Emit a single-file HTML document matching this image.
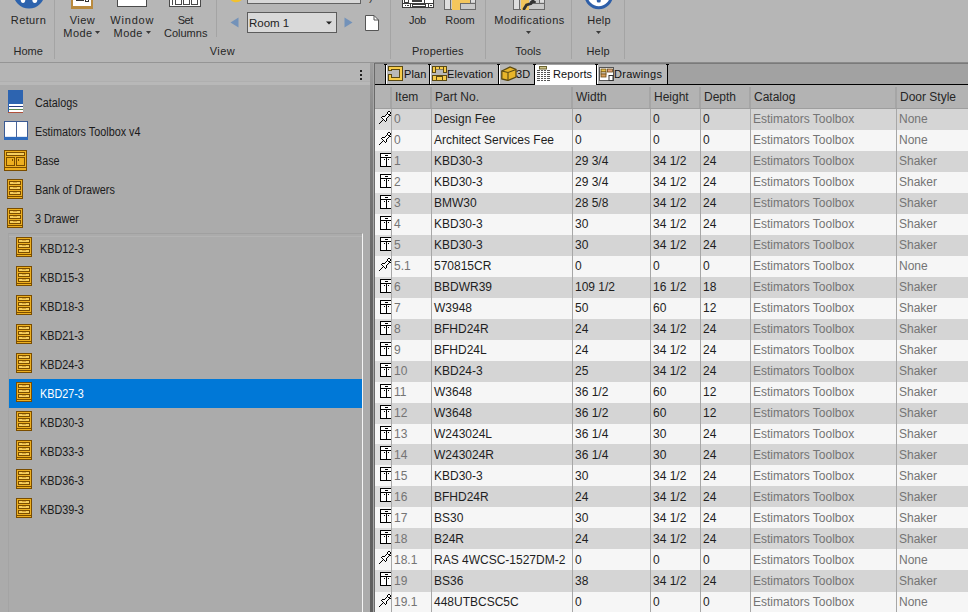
<!DOCTYPE html>
<html><head><meta charset="utf-8">
<style>
*{margin:0;padding:0;box-sizing:border-box}
html,body{width:968px;height:612px;overflow:hidden;background:#b5b5b5;font-family:"Liberation Sans",sans-serif;position:relative}
.abs{position:absolute}
/* ribbon */
#ribbon{position:absolute;left:0;top:0;width:968px;height:62px;background:#b6b6b6}
#ribbon .bl{position:absolute;left:0;top:62px;width:968px;height:1px;background:#959595}
#ribbon .bl2{position:absolute;left:375px;top:62px;width:593px;height:1px;background:#8a8a8a}
.rt{position:absolute;font-size:11px;color:#262626;white-space:nowrap;line-height:13px;width:100px;text-align:center}
.sep{position:absolute;width:1px;background:#a4a4a4}
/* left panel */
#lp{position:absolute;left:0;top:63px;width:370px;height:549px;background:#ababab}
#lph{position:absolute;left:0;top:0;width:370px;height:22px;background:#b5b5b5}
.tic{position:absolute;line-height:0}
.tt{position:absolute;left:35px;font-size:12px;line-height:13px;color:#1a1a1a;white-space:nowrap;transform:scaleX(0.9);transform-origin:0 0}
#sub{position:absolute;left:8px;top:170px;width:355px;height:400px;border-top:1px solid #a0a0a0;border-left:1px solid #a4a4a4;border-right:1px solid #f4f4f4}
.si{position:absolute;left:9px;width:353px;height:29px}
.si.sel{background:#0078d7}
.sic{position:absolute;left:7px;top:3px;line-height:0}
.st{position:absolute;left:31px;top:8px;font-size:12px;line-height:14px;color:#1a1a1a;white-space:nowrap;transform:scaleX(0.9);transform-origin:0 0}
.sel .st{color:#fff}
/* splitter */
#spl1{position:absolute;left:370px;top:63px;width:3px;height:549px;background:linear-gradient(to bottom,#9e9e9e 0px,#7c7c7c 87px,#626262 237px,#5f5f5f 549px)}
#spl2{position:absolute;left:373px;top:63px;width:1px;height:549px;background:#a6a6a6}
#spl3{position:absolute;left:374px;top:63px;width:1px;height:549px;background:#6a6a6a}
/* right */
#rp{position:absolute;left:375px;top:63px;width:593px;height:549px;background:#f0f0f0;overflow:hidden}
#tabs{position:absolute;left:0;top:0;width:593px;height:22px;background:#a2a2a2}
#tabs .tl{position:absolute;left:0;top:0;width:593px;height:1px;background:#7a7a7a}
#tabs .bot{position:absolute;left:0;top:21px;width:593px;height:1px;background:#000}
.tb{position:absolute;top:1px;width:1px;height:21px;background:#000}
.tw{position:absolute;top:2px;width:1px;height:19px;background:#fff}
.tabt{position:absolute;top:5px;font-size:11px;line-height:13px;color:#111;white-space:nowrap;letter-spacing:0.1px}
.tabi{position:absolute;top:2px}
#grid{position:absolute;left:0;top:22px;width:593px;height:527px}
#gh{position:absolute;left:0;top:0;width:593px;height:24px;background:#b3b3b3;border-bottom:1px solid #9e9e9e}
.hc{position:absolute;top:5px;font-size:12px;color:#262626;white-space:nowrap}
.hl{position:absolute;top:2px;width:2px;height:21px;background:#a5a5a5}
.r{position:absolute;left:0;width:593px;height:21px}
.r.d{background:#d5d5d5}
.r.l{background:#f6f6f6}
.c{position:absolute;top:3px;font-size:12px;color:#1e1e1e;white-space:nowrap}
.c.g{color:#747474}
.s1 .c{top:4px}
.s1 .icbg{position:absolute;left:0;top:0;width:16px;height:100%}
.r.d .icbg{background:#dcdcdc}
.rico{top:1px}
.vl{position:absolute;top:24px;width:1px;height:527px;background:#a7a7a7}
.icbg{position:absolute;left:0;top:0;width:16px;height:100%}
.r.d .icbg{background:#dcdcdc}
.rico{position:absolute;left:1px;top:0;width:16px;height:16px;line-height:0}
.ic{display:block}
</style></head><body>
<div id="ribbon">
<svg class="abs" style="left:13px;top:-23px" width="32" height="32" viewBox="0 0 32 32"><circle cx="16" cy="16" r="15.6" fill="#2d63ad"/><ellipse cx="10" cy="22.5" rx="2.3" ry="3.5" fill="#fff"/><ellipse cx="21.8" cy="22.5" rx="2.5" ry="3.5" fill="#fff"/></svg>
<div class="rt" style="left:-21.5px;top:14px;letter-spacing:0.4px">Return</div>
<div class="rt" style="left:-21.8px;top:45px;">Home</div>
<div class="sep" style="left:54px;top:0;height:59px"></div>
<svg class="abs" style="left:71px;top:-6px" width="22" height="15" viewBox="0 0 22 15" shape-rendering="crispEdges"><rect x="0" y="0" width="22" height="15" fill="#b98a3e"/><rect x="2" y="0" width="18" height="12" fill="#fff"/><rect x="5" y="6" width="8" height="1" fill="#333"/><rect x="14" y="4" width="4" height="4" fill="#333"/><rect x="15" y="5" width="2" height="2" fill="#fff"/></svg>
<div class="rt" style="left:32.5px;top:14px;letter-spacing:0.5px">View</div>
<div class="rt" style="left:28.0px;top:27px;letter-spacing:0.45px">Mode</div>
<svg class="abs" style="left:95px;top:31px" width="5" height="3" viewBox="0 0 5 3"><path d="M0 0H5L2.5 3Z" fill="#3a3a3a"/></svg>
<svg class="abs" style="left:117px;top:-6px" width="30" height="13" viewBox="0 0 30 13" shape-rendering="crispEdges"><rect x="0" y="0" width="30" height="13" fill="#4a4a4a"/><rect x="1" y="0" width="28" height="12" fill="#fff"/></svg>
<div class="rt" style="left:82.3px;top:14px;letter-spacing:0.8px">Window</div>
<div class="rt" style="left:78.2px;top:27px;letter-spacing:0.45px">Mode</div>
<svg class="abs" style="left:146px;top:31px" width="5" height="3" viewBox="0 0 5 3"><path d="M0 0H5L2.5 3Z" fill="#3a3a3a"/></svg>
<svg class="abs" style="left:169px;top:-6px" width="32" height="13" viewBox="0 0 32 13" shape-rendering="crispEdges"><rect x="0" y="0" width="32" height="13" fill="#4a4a4a"/><rect x="1" y="0" width="30" height="12" fill="#fff"/><rect x="3" y="4" width="1" height="7" fill="#4a4a4a"/><rect x="6" y="4" width="7" height="7" fill="#4a4a4a"/><rect x="7" y="5" width="5" height="5" fill="#fff"/><rect x="14" y="4" width="7" height="7" fill="#4a4a4a"/><rect x="15" y="5" width="5" height="5" fill="#fff"/><rect x="22" y="4" width="7" height="7" fill="#4a4a4a"/><rect x="23" y="5" width="5" height="5" fill="#fff"/></svg>
<div class="rt" style="left:135.3px;top:14px;letter-spacing:-0.5px">Set</div>
<div class="rt" style="left:135.7px;top:27px;">Columns</div>
<div class="sep" style="left:216px;top:0;height:37px"></div>
<div class="rt" style="left:172.5px;top:45px;letter-spacing:0.5px">View</div>
<svg class="abs" style="left:230px;top:-6px" width="13" height="9" viewBox="0 0 13 9"><path d="M0 0H13V5Q9 9 4 8Q1 7 0 5Z" fill="#f2c12e"/><path d="M2 1 Q5 6 10 3" stroke="#7a5a10" stroke-width="1" fill="none"/></svg>
<div class="abs" style="left:247px;top:-10px;width:114px;height:14px;background:#d8d8d8;border:1px solid #626262"></div>
<div class="abs" style="left:369px;top:-9px;font-size:11px;color:#333;line-height:13px">)</div>
<svg class="abs" style="left:230px;top:17px" width="9" height="11" viewBox="0 0 9 11"><path d="M8.5 0.5 L0.5 5.5 L8.5 10.5 Z" fill="#7392b9"/></svg>
<div class="abs" style="left:247px;top:12px;width:90px;height:21px;background:#d9d9d9;border:1px solid #5c5c5c"></div>
<div class="abs" style="left:249px;top:16px;font-size:11.5px;line-height:14px;color:#222;letter-spacing:0px">Room 1</div>
<svg class="abs" style="left:326px;top:21px" width="6" height="4" viewBox="0 0 6 4"><path d="M0 0.5H6L3 3.5Z" fill="#222"/></svg>
<svg class="abs" style="left:344px;top:17px" width="9" height="11" viewBox="0 0 9 11"><path d="M0.5 0.5 L8.5 5.5 L0.5 10.5 Z" fill="#7392b9"/></svg>
<svg class="abs" style="left:365px;top:15px" width="14" height="16" viewBox="0 0 14 16"><path d="M0.5 0.5 L9 0.5 L13.5 5 L13.5 15.5 L0.5 15.5 Z" fill="#fff" stroke="#555"/><path d="M9 0.5 V5 H13.5" fill="none" stroke="#555"/></svg>
<div class="sep" style="left:390px;top:0;height:59px"></div>
<svg class="abs" style="left:402px;top:0px" width="32" height="9" viewBox="0 0 32 9" shape-rendering="crispEdges"><rect x="0" y="0" width="32" height="8" fill="#3c3c3c"/><rect x="1" y="0" width="30" height="7" fill="#fff"/><rect x="1" y="3" width="30" height="1" fill="#3c3c3c"/><rect x="2" y="0" width="5" height="3" fill="#3c3c3c"/><rect x="3" y="0" width="3" height="2" fill="#fff"/><rect x="10" y="0" width="10" height="2" fill="#3c3c3c"/><rect x="22" y="0" width="1" height="3" fill="#3c3c3c"/><rect x="8" y="4" width="1" height="3" fill="#3c3c3c"/><rect x="26" y="4" width="1" height="3" fill="#3c3c3c"/><rect x="3" y="5" width="1" height="1" fill="#3c3c3c"/><rect x="5" y="5" width="2" height="1" fill="#3c3c3c"/><rect x="10" y="4" width="14" height="3" fill="#3c3c3c"/><rect x="11" y="5" width="12" height="1" fill="#fff"/><rect x="28" y="5" width="2" height="1" fill="#3c3c3c"/></svg>
<svg class="abs" style="left:444px;top:0px" width="32" height="10" viewBox="0 0 32 10" shape-rendering="crispEdges"><rect x="0" y="0" width="32" height="10" fill="#6a6a6a"/><rect x="1" y="0" width="30" height="9" fill="#c9c9c9"/><rect x="1" y="0" width="5" height="9" fill="#dedede"/><rect x="6" y="0" width="1" height="9" fill="#6a6a6a"/><rect x="8" y="0" width="8" height="10" fill="#f4c65c"/><rect x="16" y="0" width="10" height="3" fill="#f4c65c"/><rect x="16" y="3" width="16" height="1" fill="#6a6a6a"/><rect x="26" y="0" width="1" height="3" fill="#6a6a6a"/><rect x="27" y="0" width="4" height="2" fill="#dedede"/><rect x="16" y="3" width="1" height="7" fill="#6a6a6a"/></svg>
<div class="rt" style="left:367.5px;top:14px;letter-spacing:-0.3px">Job</div>
<div class="rt" style="left:409.9px;top:14px;">Room</div>
<div class="rt" style="left:387.9px;top:45px;letter-spacing:0.15px">Properties</div>
<div class="sep" style="left:485px;top:0;height:59px"></div>
<svg class="abs" style="left:513px;top:0px" width="32" height="10" viewBox="0 0 32 10" shape-rendering="crispEdges"><rect x="0" y="0" width="32" height="10" fill="#6a6a6a"/><rect x="1" y="0" width="30" height="9" fill="#c9c9c9"/><rect x="1" y="0" width="5" height="9" fill="#dedede"/><rect x="6" y="0" width="1" height="9" fill="#6a6a6a"/><rect x="8" y="0" width="8" height="10" fill="#f4c65c"/><rect x="26" y="0" width="1" height="3" fill="#6a6a6a"/><rect x="27" y="0" width="4" height="2" fill="#dedede"/><rect x="16" y="3" width="16" height="1" fill="#6a6a6a"/></svg>
<svg class="abs" style="left:513px;top:0px" width="32" height="10" viewBox="0 0 32 10"><path d="M11 9 L13.5 5 L18 3.5 L20 0.5" stroke="#333" stroke-width="2.8" fill="none" stroke-linecap="round"/><path d="M18 2 L22 2" stroke="#333" stroke-width="2" stroke-linecap="round"/></svg>
<div class="rt" style="left:479.5px;top:14px;letter-spacing:0.48px">Modifications</div>
<svg class="abs" style="left:526px;top:31px" width="5" height="3" viewBox="0 0 5 3"><path d="M0 0H5L2.5 3Z" fill="#3a3a3a"/></svg>
<div class="rt" style="left:478.2px;top:45px;">Tools</div>
<div class="sep" style="left:571px;top:0;height:59px"></div>
<svg class="abs" style="left:584px;top:-20px" width="30" height="30" viewBox="0 0 30 30"><circle cx="14.75" cy="14.75" r="12.9" fill="#fff" stroke="#2d5ea8" stroke-width="3"/><rect x="12.75" y="12" width="4" height="10.5" rx="1.5" fill="#2d5ea8"/></svg>
<div class="rt" style="left:549.0px;top:14px;letter-spacing:0.2px">Help</div>
<svg class="abs" style="left:596px;top:31px" width="5" height="3" viewBox="0 0 5 3"><path d="M0 0H5L2.5 3Z" fill="#3a3a3a"/></svg>
<div class="rt" style="left:548.2px;top:45px;letter-spacing:0.2px">Help</div>
<div class="sep" style="left:624px;top:0;height:59px"></div>
  <div class="bl"></div><div class="bl2"></div>
</div>

<div id="lp">
  <div id="lph">
    <div class="abs" style="left:360px;top:7px;width:2px;height:2px;background:#222"></div>
    <div class="abs" style="left:360px;top:11px;width:2px;height:2px;background:#222"></div>
    <div class="abs" style="left:360px;top:15px;width:2px;height:2px;background:#222"></div>
  </div>
  <div class="abs" style="left:0;top:18px;width:370px;height:1px;background:#afafaf"></div>
  <div class="abs" style="left:0;top:19px;width:370px;height:3px;background:#b8b8b8"></div>
  <div style="position:absolute;left:0;top:-63px">
  <div class="tic" style="left:8px;top:90px"><svg width="15" height="23" viewBox="0 0 15 23" shape-rendering="crispEdges" style="display:block"><rect x="0" y="0" width="15" height="14" fill="#2d64b0"/><rect x="0" y="14" width="15" height="9" fill="#2d64b0"/><rect x="1" y="14" width="14" height="2" fill="#fff"/><rect x="1" y="16" width="14" height="1" fill="#2a3f80"/><rect x="1" y="17" width="14" height="2" fill="#fff"/><rect x="1" y="19" width="14" height="1" fill="#5a8a50"/><rect x="1" y="20" width="14" height="2" fill="#fff"/><rect x="0" y="22" width="15" height="1" fill="#b0503a"/></svg></div><span class="tt" style="top:97px">Catalogs</span>
<div class="tic" style="left:4px;top:121px"><svg width="24" height="19" viewBox="0 0 24 19" shape-rendering="crispEdges" style="display:block"><rect x="0" y="0" width="24" height="17" fill="#3a5a93"/><rect x="1" y="1" width="11" height="15" fill="#fff"/><rect x="13" y="1" width="10" height="15" fill="#fff"/><rect x="12" y="1" width="1" height="15" fill="#4a6498"/><rect x="0" y="16" width="24" height="3" fill="#2f6bbd"/><rect x="1" y="15" width="11" height="1" fill="#dfe7f3"/><rect x="13" y="15" width="10" height="1" fill="#dfe7f3"/></svg></div><span class="tt" style="top:126px">Estimators Toolbox v4</span>
<div class="tic" style="left:4px;top:150px"><svg width="23" height="21" viewBox="0 0 23 21" shape-rendering="crispEdges" style="display:block"><rect x="0" y="0" width="23" height="21" fill="#7a4d00"/><rect x="1" y="1" width="21" height="19" fill="#eeb020"/><rect x="2" y="2" width="19" height="4" fill="#7a4d00"/><rect x="3" y="3" width="17" height="2" fill="#f6cf5e"/><rect x="2" y="7" width="9" height="9" fill="#7a4d00"/><rect x="3" y="8" width="7" height="7" fill="#eeb020"/><rect x="12" y="7" width="9" height="9" fill="#7a4d00"/><rect x="13" y="8" width="7" height="7" fill="#eeb020"/><rect x="8" y="9" width="1" height="2" fill="#7a4d00"/><rect x="14" y="9" width="1" height="2" fill="#7a4d00"/><rect x="1" y="17" width="21" height="1" fill="#7a4d00"/></svg></div><span class="tt" style="top:155px">Base</span>
<div class="tic" style="left:7px;top:179px"><svg width="16" height="20" viewBox="0 0 16 20" shape-rendering="crispEdges" style="display:block"><rect x="0" y="0" width="16" height="20" fill="#7a4d00"/><rect x="1" y="1" width="14" height="18" fill="#eeb020"/><rect x="2" y="2" width="12" height="4" fill="#7a4d00"/><rect x="3" y="3" width="10" height="2" fill="#f6cf5e"/><rect x="6" y="3" width="4" height="1" fill="#d9a63a"/><rect x="2" y="7" width="12" height="4" fill="#7a4d00"/><rect x="3" y="8" width="10" height="2" fill="#f6cf5e"/><rect x="6" y="8" width="4" height="1" fill="#d9a63a"/><rect x="2" y="12" width="12" height="4" fill="#7a4d00"/><rect x="3" y="13" width="10" height="2" fill="#f6cf5e"/><rect x="6" y="13" width="4" height="1" fill="#d9a63a"/><rect x="1" y="17" width="14" height="1" fill="#7a4d00"/></svg></div><span class="tt" style="top:184px">Bank of Drawers</span>
<div class="tic" style="left:7px;top:208px"><svg width="16" height="20" viewBox="0 0 16 20" shape-rendering="crispEdges" style="display:block"><rect x="0" y="0" width="16" height="20" fill="#7a4d00"/><rect x="1" y="1" width="14" height="18" fill="#eeb020"/><rect x="2" y="2" width="12" height="4" fill="#7a4d00"/><rect x="3" y="3" width="10" height="2" fill="#f6cf5e"/><rect x="6" y="3" width="4" height="1" fill="#d9a63a"/><rect x="2" y="7" width="12" height="4" fill="#7a4d00"/><rect x="3" y="8" width="10" height="2" fill="#f6cf5e"/><rect x="6" y="8" width="4" height="1" fill="#d9a63a"/><rect x="2" y="12" width="12" height="4" fill="#7a4d00"/><rect x="3" y="13" width="10" height="2" fill="#f6cf5e"/><rect x="6" y="13" width="4" height="1" fill="#d9a63a"/><rect x="1" y="17" width="14" height="1" fill="#7a4d00"/></svg></div><span class="tt" style="top:213px">3 Drawer</span>
  </div>
  <div id="sub"></div><div class="abs" style="left:9px;top:173px;width:353px;height:1px;background:#b3b3b3"></div>
  <div style="position:absolute;left:0;top:-63px">
  <div class="si" style="top:234px"><div class="sic"><svg width="16" height="20" viewBox="0 0 16 20" shape-rendering="crispEdges" style="display:block"><rect x="0" y="0" width="16" height="20" fill="#7a4d00"/><rect x="1" y="1" width="14" height="18" fill="#eeb020"/><rect x="2" y="2" width="12" height="4" fill="#7a4d00"/><rect x="3" y="3" width="10" height="2" fill="#f6cf5e"/><rect x="6" y="3" width="4" height="1" fill="#d9a63a"/><rect x="2" y="7" width="12" height="4" fill="#7a4d00"/><rect x="3" y="8" width="10" height="2" fill="#f6cf5e"/><rect x="6" y="8" width="4" height="1" fill="#d9a63a"/><rect x="2" y="12" width="12" height="4" fill="#7a4d00"/><rect x="3" y="13" width="10" height="2" fill="#f6cf5e"/><rect x="6" y="13" width="4" height="1" fill="#d9a63a"/><rect x="1" y="17" width="14" height="1" fill="#7a4d00"/></svg></div><span class="st">KBD12-3</span></div>
<div class="si" style="top:263px"><div class="sic"><svg width="16" height="20" viewBox="0 0 16 20" shape-rendering="crispEdges" style="display:block"><rect x="0" y="0" width="16" height="20" fill="#7a4d00"/><rect x="1" y="1" width="14" height="18" fill="#eeb020"/><rect x="2" y="2" width="12" height="4" fill="#7a4d00"/><rect x="3" y="3" width="10" height="2" fill="#f6cf5e"/><rect x="6" y="3" width="4" height="1" fill="#d9a63a"/><rect x="2" y="7" width="12" height="4" fill="#7a4d00"/><rect x="3" y="8" width="10" height="2" fill="#f6cf5e"/><rect x="6" y="8" width="4" height="1" fill="#d9a63a"/><rect x="2" y="12" width="12" height="4" fill="#7a4d00"/><rect x="3" y="13" width="10" height="2" fill="#f6cf5e"/><rect x="6" y="13" width="4" height="1" fill="#d9a63a"/><rect x="1" y="17" width="14" height="1" fill="#7a4d00"/></svg></div><span class="st">KBD15-3</span></div>
<div class="si" style="top:292px"><div class="sic"><svg width="16" height="20" viewBox="0 0 16 20" shape-rendering="crispEdges" style="display:block"><rect x="0" y="0" width="16" height="20" fill="#7a4d00"/><rect x="1" y="1" width="14" height="18" fill="#eeb020"/><rect x="2" y="2" width="12" height="4" fill="#7a4d00"/><rect x="3" y="3" width="10" height="2" fill="#f6cf5e"/><rect x="6" y="3" width="4" height="1" fill="#d9a63a"/><rect x="2" y="7" width="12" height="4" fill="#7a4d00"/><rect x="3" y="8" width="10" height="2" fill="#f6cf5e"/><rect x="6" y="8" width="4" height="1" fill="#d9a63a"/><rect x="2" y="12" width="12" height="4" fill="#7a4d00"/><rect x="3" y="13" width="10" height="2" fill="#f6cf5e"/><rect x="6" y="13" width="4" height="1" fill="#d9a63a"/><rect x="1" y="17" width="14" height="1" fill="#7a4d00"/></svg></div><span class="st">KBD18-3</span></div>
<div class="si" style="top:321px"><div class="sic"><svg width="16" height="20" viewBox="0 0 16 20" shape-rendering="crispEdges" style="display:block"><rect x="0" y="0" width="16" height="20" fill="#7a4d00"/><rect x="1" y="1" width="14" height="18" fill="#eeb020"/><rect x="2" y="2" width="12" height="4" fill="#7a4d00"/><rect x="3" y="3" width="10" height="2" fill="#f6cf5e"/><rect x="6" y="3" width="4" height="1" fill="#d9a63a"/><rect x="2" y="7" width="12" height="4" fill="#7a4d00"/><rect x="3" y="8" width="10" height="2" fill="#f6cf5e"/><rect x="6" y="8" width="4" height="1" fill="#d9a63a"/><rect x="2" y="12" width="12" height="4" fill="#7a4d00"/><rect x="3" y="13" width="10" height="2" fill="#f6cf5e"/><rect x="6" y="13" width="4" height="1" fill="#d9a63a"/><rect x="1" y="17" width="14" height="1" fill="#7a4d00"/></svg></div><span class="st">KBD21-3</span></div>
<div class="si" style="top:350px"><div class="sic"><svg width="16" height="20" viewBox="0 0 16 20" shape-rendering="crispEdges" style="display:block"><rect x="0" y="0" width="16" height="20" fill="#7a4d00"/><rect x="1" y="1" width="14" height="18" fill="#eeb020"/><rect x="2" y="2" width="12" height="4" fill="#7a4d00"/><rect x="3" y="3" width="10" height="2" fill="#f6cf5e"/><rect x="6" y="3" width="4" height="1" fill="#d9a63a"/><rect x="2" y="7" width="12" height="4" fill="#7a4d00"/><rect x="3" y="8" width="10" height="2" fill="#f6cf5e"/><rect x="6" y="8" width="4" height="1" fill="#d9a63a"/><rect x="2" y="12" width="12" height="4" fill="#7a4d00"/><rect x="3" y="13" width="10" height="2" fill="#f6cf5e"/><rect x="6" y="13" width="4" height="1" fill="#d9a63a"/><rect x="1" y="17" width="14" height="1" fill="#7a4d00"/></svg></div><span class="st">KBD24-3</span></div>
<div class="si sel" style="top:379px"><div class="sic"><svg width="16" height="20" viewBox="0 0 16 20" shape-rendering="crispEdges" style="display:block"><rect x="0" y="0" width="16" height="20" fill="#7a4d00"/><rect x="1" y="1" width="14" height="18" fill="#eeb020"/><rect x="2" y="2" width="12" height="4" fill="#7a4d00"/><rect x="3" y="3" width="10" height="2" fill="#f6cf5e"/><rect x="6" y="3" width="4" height="1" fill="#d9a63a"/><rect x="2" y="7" width="12" height="4" fill="#7a4d00"/><rect x="3" y="8" width="10" height="2" fill="#f6cf5e"/><rect x="6" y="8" width="4" height="1" fill="#d9a63a"/><rect x="2" y="12" width="12" height="4" fill="#7a4d00"/><rect x="3" y="13" width="10" height="2" fill="#f6cf5e"/><rect x="6" y="13" width="4" height="1" fill="#d9a63a"/><rect x="1" y="17" width="14" height="1" fill="#7a4d00"/></svg></div><span class="st">KBD27-3</span></div>
<div class="si" style="top:408px"><div class="sic"><svg width="16" height="20" viewBox="0 0 16 20" shape-rendering="crispEdges" style="display:block"><rect x="0" y="0" width="16" height="20" fill="#7a4d00"/><rect x="1" y="1" width="14" height="18" fill="#eeb020"/><rect x="2" y="2" width="12" height="4" fill="#7a4d00"/><rect x="3" y="3" width="10" height="2" fill="#f6cf5e"/><rect x="6" y="3" width="4" height="1" fill="#d9a63a"/><rect x="2" y="7" width="12" height="4" fill="#7a4d00"/><rect x="3" y="8" width="10" height="2" fill="#f6cf5e"/><rect x="6" y="8" width="4" height="1" fill="#d9a63a"/><rect x="2" y="12" width="12" height="4" fill="#7a4d00"/><rect x="3" y="13" width="10" height="2" fill="#f6cf5e"/><rect x="6" y="13" width="4" height="1" fill="#d9a63a"/><rect x="1" y="17" width="14" height="1" fill="#7a4d00"/></svg></div><span class="st">KBD30-3</span></div>
<div class="si" style="top:437px"><div class="sic"><svg width="16" height="20" viewBox="0 0 16 20" shape-rendering="crispEdges" style="display:block"><rect x="0" y="0" width="16" height="20" fill="#7a4d00"/><rect x="1" y="1" width="14" height="18" fill="#eeb020"/><rect x="2" y="2" width="12" height="4" fill="#7a4d00"/><rect x="3" y="3" width="10" height="2" fill="#f6cf5e"/><rect x="6" y="3" width="4" height="1" fill="#d9a63a"/><rect x="2" y="7" width="12" height="4" fill="#7a4d00"/><rect x="3" y="8" width="10" height="2" fill="#f6cf5e"/><rect x="6" y="8" width="4" height="1" fill="#d9a63a"/><rect x="2" y="12" width="12" height="4" fill="#7a4d00"/><rect x="3" y="13" width="10" height="2" fill="#f6cf5e"/><rect x="6" y="13" width="4" height="1" fill="#d9a63a"/><rect x="1" y="17" width="14" height="1" fill="#7a4d00"/></svg></div><span class="st">KBD33-3</span></div>
<div class="si" style="top:466px"><div class="sic"><svg width="16" height="20" viewBox="0 0 16 20" shape-rendering="crispEdges" style="display:block"><rect x="0" y="0" width="16" height="20" fill="#7a4d00"/><rect x="1" y="1" width="14" height="18" fill="#eeb020"/><rect x="2" y="2" width="12" height="4" fill="#7a4d00"/><rect x="3" y="3" width="10" height="2" fill="#f6cf5e"/><rect x="6" y="3" width="4" height="1" fill="#d9a63a"/><rect x="2" y="7" width="12" height="4" fill="#7a4d00"/><rect x="3" y="8" width="10" height="2" fill="#f6cf5e"/><rect x="6" y="8" width="4" height="1" fill="#d9a63a"/><rect x="2" y="12" width="12" height="4" fill="#7a4d00"/><rect x="3" y="13" width="10" height="2" fill="#f6cf5e"/><rect x="6" y="13" width="4" height="1" fill="#d9a63a"/><rect x="1" y="17" width="14" height="1" fill="#7a4d00"/></svg></div><span class="st">KBD36-3</span></div>
<div class="si" style="top:495px"><div class="sic"><svg width="16" height="20" viewBox="0 0 16 20" shape-rendering="crispEdges" style="display:block"><rect x="0" y="0" width="16" height="20" fill="#7a4d00"/><rect x="1" y="1" width="14" height="18" fill="#eeb020"/><rect x="2" y="2" width="12" height="4" fill="#7a4d00"/><rect x="3" y="3" width="10" height="2" fill="#f6cf5e"/><rect x="6" y="3" width="4" height="1" fill="#d9a63a"/><rect x="2" y="7" width="12" height="4" fill="#7a4d00"/><rect x="3" y="8" width="10" height="2" fill="#f6cf5e"/><rect x="6" y="8" width="4" height="1" fill="#d9a63a"/><rect x="2" y="12" width="12" height="4" fill="#7a4d00"/><rect x="3" y="13" width="10" height="2" fill="#f6cf5e"/><rect x="6" y="13" width="4" height="1" fill="#d9a63a"/><rect x="1" y="17" width="14" height="1" fill="#7a4d00"/></svg></div><span class="st">KBD39-3</span></div>
  </div>
</div>
<div id="spl1"></div><div id="spl2"></div><div id="spl3"></div>

<div id="rp">
  <div id="tabs">
    <div class="tl"></div>
    <!-- tab bgs (coords relative to 375,63) -->
    <div class="abs" style="left:11px;top:2px;width:43px;height:19px;background:#b8b8b8"></div>
    <div class="abs" style="left:55px;top:2px;width:68px;height:19px;background:#b8b8b8"></div>
    <div class="abs" style="left:124px;top:2px;width:35px;height:19px;background:#b8b8b8"></div>
    <div class="abs" style="left:160px;top:2px;width:61px;height:22px;background:#fff"></div>
    <div class="abs" style="left:222px;top:2px;width:70px;height:19px;background:#b8b8b8"></div>
    <div class="bot" style="width:159px"></div>
    <div class="bot" style="left:221px;width:372px"></div>
    <!-- black lines -->
    <div class="tb" style="left:10px"></div><div class="tw" style="left:11px"></div>
    <div class="tb" style="left:54px"></div><div class="tw" style="left:55px"></div>
    <div class="tb" style="left:123px"></div><div class="tw" style="left:124px"></div>
    <div class="tb" style="left:159px"></div>
    <div class="tb" style="left:221px"></div><div class="tw" style="left:222px"></div>
    <div class="tb" style="left:292px"></div>
    <div class="abs" style="left:9px;top:1px;width:1px;height:1px;background:#000"></div><div class="abs" style="left:11px;top:1px;width:1px;height:1px;background:#000"></div><div class="abs" style="left:53px;top:1px;width:1px;height:1px;background:#000"></div><div class="abs" style="left:55px;top:1px;width:1px;height:1px;background:#000"></div><div class="abs" style="left:122px;top:1px;width:1px;height:1px;background:#000"></div><div class="abs" style="left:124px;top:1px;width:1px;height:1px;background:#000"></div><div class="abs" style="left:158px;top:1px;width:1px;height:1px;background:#000"></div><div class="abs" style="left:160px;top:1px;width:1px;height:1px;background:#000"></div><div class="abs" style="left:220px;top:1px;width:1px;height:1px;background:#000"></div><div class="abs" style="left:222px;top:1px;width:1px;height:1px;background:#000"></div><div class="abs" style="left:291px;top:1px;width:1px;height:1px;background:#000"></div><div class="abs" style="left:293px;top:1px;width:1px;height:1px;background:#000"></div>
    <!-- plan icon 388-402,66-80 -->
    <svg class="abs" style="left:13px;top:3px" width="15" height="15" viewBox="0 0 15 15"><path d="M0 0H15V15H0V8H4V11H11V4H4V5H0Z" fill="#5b4a12"/><path d="M1 1H14V14H1V9H3V12H12V3H3V4H1Z" fill="#f7cc4a"/></svg>
    <div class="tabt" style="left:29px">Plan</div>
    <!-- elevation icon 432-447,66-81 -->
    <svg class="abs" style="left:57px;top:3px" width="15" height="15" viewBox="0 0 15 15"><g fill="#5b4a12"><rect x="0" y="0" width="4" height="7"/><rect x="3" y="0" width="9" height="3.5"/><rect x="11" y="0" width="4" height="7"/><rect x="0" y="9" width="15" height="6"/></g><g fill="#f7cc4a"><rect x="1" y="1" width="2" height="5"/><rect x="4" y="1" width="3" height="2"/><rect x="8" y="1" width="3" height="2"/><rect x="12" y="1" width="2" height="5"/><rect x="1" y="10" width="3" height="4"/><rect x="5" y="11" width="5" height="3"/><rect x="11" y="10" width="3" height="4"/></g></svg>
    <div class="tabt" style="left:72px">Elevation</div>
    <!-- 3D icon 501-516 -->
    <svg class="abs" style="left:126px;top:3px" width="16" height="15" viewBox="0 0 16 15"><path d="M0.8 5 L9 1 L15 3.5 L15 11 L7 14.5 L0.8 13 Z" fill="#e8b52a" stroke="#5b4a12" stroke-width="1.3"/><path d="M0.8 5 L7 6.5 L15 3.5 M7 6.5 L7 14" fill="none" stroke="#5b4a12" stroke-width="1.1"/></svg>
    <div class="tabt" style="left:141px">3D</div>
    <!-- reports icon -->
    <svg class="abs" style="left:162px;top:3px" width="14" height="15" viewBox="0 0 14 15"><rect x="2.5" y="0.5" width="7" height="2.5" fill="#cfc58a" stroke="#6b6330" stroke-width="1"/><g fill="#555"><rect x="0" y="4" width="3" height="1"/><rect x="4" y="4" width="2" height="1"/><rect x="7" y="4" width="2" height="1"/><rect x="10" y="4" width="3" height="1"/><rect x="0" y="6" width="3" height="1"/><rect x="4" y="6" width="2" height="1"/><rect x="7" y="6" width="2" height="1"/><rect x="10" y="6" width="3" height="1"/><rect x="0" y="8" width="3" height="1"/><rect x="4" y="8" width="2" height="1"/><rect x="7" y="8" width="2" height="1"/><rect x="10" y="8" width="3" height="1"/><rect x="0" y="10" width="3" height="1"/><rect x="4" y="10" width="2" height="1"/><rect x="7" y="10" width="2" height="1"/><rect x="10" y="10" width="3" height="1"/><rect x="0" y="12" width="3" height="1"/><rect x="4" y="12" width="2" height="1"/><rect x="7" y="12" width="2" height="1"/><rect x="10" y="12" width="3" height="1"/><rect x="0" y="14" width="3" height="1"/><rect x="4" y="14" width="2" height="1"/><rect x="7" y="14" width="2" height="1"/><rect x="10" y="14" width="3" height="1"/></g></svg>
    <div class="tabt" style="left:178px">Reports</div>
    <!-- drawings icon 599-614, 67-80 -->
    <svg class="abs" style="left:224px;top:4px" width="15" height="14" viewBox="0 0 15 14"><rect x="0.5" y="0.5" width="14" height="13" fill="#fff" stroke="#555"/><rect x="2" y="2" width="5" height="3" fill="#e8c44a" stroke="#6b4a12" stroke-width="0.8"/><rect x="2" y="5" width="5" height="2" fill="#fff" stroke="#6b4a12" stroke-width="0.8"/><rect x="2" y="7" width="5" height="3" fill="#d9a060" stroke="#6b4a12" stroke-width="0.8"/><rect x="8.5" y="2" width="5" height="3" fill="#e0a080" stroke="#6b4a12" stroke-width="0.8"/><rect x="10" y="8.5" width="4" height="5" fill="#fff" stroke="#333" stroke-width="1"/></svg>
    <div class="tabt" style="left:239px;letter-spacing:0.3px">Drawings</div>
  </div>
  <div id="grid">
    <div class="r d" style="top:24px;height:21px"><div class="icbg"></div><div class="rico"><svg class="ic" width="16" height="16" viewBox="0 0 16 16" shape-rendering="crispEdges"><rect x="12" y="3" width="2" height="2" fill="#fff"/><rect x="6" y="8" width="5" height="1" fill="#fff"/><rect x="7" y="9" width="3" height="1" fill="#fff"/><rect x="8" y="10" width="2" height="1" fill="#fff"/><rect x="9" y="11" width="1" height="1" fill="#fff"/><rect x="11" y="6" width="2" height="1" fill="#fff"/><rect x="10" y="7" width="2" height="1" fill="#fff"/><rect x="11" y="5" width="1" height="1" fill="#fff"/><rect x="10" y="6" width="1" height="1" fill="#fff"/><rect x="12" y="2" width="1" height="1" fill="#000"/><rect x="13" y="2" width="1" height="1" fill="#000"/><rect x="11" y="3" width="1" height="1" fill="#000"/><rect x="14" y="3" width="1" height="1" fill="#000"/><rect x="11" y="4" width="1" height="1" fill="#000"/><rect x="14" y="4" width="1" height="1" fill="#000"/><rect x="10" y="5" width="1" height="1" fill="#000"/><rect x="12" y="5" width="1" height="1" fill="#000"/><rect x="13" y="5" width="1" height="1" fill="#000"/><rect x="9" y="6" width="1" height="1" fill="#000"/><rect x="13" y="6" width="1" height="1" fill="#000"/><rect x="14" y="6" width="1" height="1" fill="#000"/><rect x="6" y="7" width="1" height="1" fill="#000"/><rect x="7" y="7" width="1" height="1" fill="#000"/><rect x="8" y="7" width="1" height="1" fill="#000"/><rect x="12" y="7" width="1" height="1" fill="#000"/><rect x="5" y="8" width="1" height="1" fill="#000"/><rect x="11" y="8" width="1" height="1" fill="#000"/><rect x="6" y="9" width="1" height="1" fill="#000"/><rect x="10" y="9" width="1" height="1" fill="#000"/><rect x="7" y="10" width="1" height="1" fill="#000"/><rect x="10" y="10" width="1" height="1" fill="#000"/><rect x="6" y="11" width="1" height="1" fill="#000"/><rect x="8" y="11" width="1" height="1" fill="#000"/><rect x="10" y="11" width="1" height="1" fill="#000"/><rect x="5" y="12" width="1" height="1" fill="#000"/><rect x="9" y="12" width="1" height="1" fill="#000"/><rect x="4" y="13" width="1" height="1" fill="#000"/><rect x="3" y="14" width="1" height="1" fill="#000"/></svg></div><span class="c g" style="left:19px">0</span><span class="c" style="left:59px">Design Fee</span><span class="c" style="left:200px">0</span><span class="c" style="left:278px">0</span><span class="c" style="left:328px">0</span><span class="c g" style="left:378px">Estimators Toolbox</span><span class="c g" style="left:524px">None</span></div>
<div class="r l" style="top:45px;height:21px"><div class="icbg"></div><div class="rico"><svg class="ic" width="16" height="16" viewBox="0 0 16 16" shape-rendering="crispEdges"><rect x="12" y="3" width="2" height="2" fill="#fff"/><rect x="6" y="8" width="5" height="1" fill="#fff"/><rect x="7" y="9" width="3" height="1" fill="#fff"/><rect x="8" y="10" width="2" height="1" fill="#fff"/><rect x="9" y="11" width="1" height="1" fill="#fff"/><rect x="11" y="6" width="2" height="1" fill="#fff"/><rect x="10" y="7" width="2" height="1" fill="#fff"/><rect x="11" y="5" width="1" height="1" fill="#fff"/><rect x="10" y="6" width="1" height="1" fill="#fff"/><rect x="12" y="2" width="1" height="1" fill="#000"/><rect x="13" y="2" width="1" height="1" fill="#000"/><rect x="11" y="3" width="1" height="1" fill="#000"/><rect x="14" y="3" width="1" height="1" fill="#000"/><rect x="11" y="4" width="1" height="1" fill="#000"/><rect x="14" y="4" width="1" height="1" fill="#000"/><rect x="10" y="5" width="1" height="1" fill="#000"/><rect x="12" y="5" width="1" height="1" fill="#000"/><rect x="13" y="5" width="1" height="1" fill="#000"/><rect x="9" y="6" width="1" height="1" fill="#000"/><rect x="13" y="6" width="1" height="1" fill="#000"/><rect x="14" y="6" width="1" height="1" fill="#000"/><rect x="6" y="7" width="1" height="1" fill="#000"/><rect x="7" y="7" width="1" height="1" fill="#000"/><rect x="8" y="7" width="1" height="1" fill="#000"/><rect x="12" y="7" width="1" height="1" fill="#000"/><rect x="5" y="8" width="1" height="1" fill="#000"/><rect x="11" y="8" width="1" height="1" fill="#000"/><rect x="6" y="9" width="1" height="1" fill="#000"/><rect x="10" y="9" width="1" height="1" fill="#000"/><rect x="7" y="10" width="1" height="1" fill="#000"/><rect x="10" y="10" width="1" height="1" fill="#000"/><rect x="6" y="11" width="1" height="1" fill="#000"/><rect x="8" y="11" width="1" height="1" fill="#000"/><rect x="10" y="11" width="1" height="1" fill="#000"/><rect x="5" y="12" width="1" height="1" fill="#000"/><rect x="9" y="12" width="1" height="1" fill="#000"/><rect x="4" y="13" width="1" height="1" fill="#000"/><rect x="3" y="14" width="1" height="1" fill="#000"/></svg></div><span class="c g" style="left:19px">0</span><span class="c" style="left:59px">Architect Services Fee</span><span class="c" style="left:200px">0</span><span class="c" style="left:278px">0</span><span class="c" style="left:328px">0</span><span class="c g" style="left:378px">Estimators Toolbox</span><span class="c g" style="left:524px">None</span></div>
<div class="r d" style="top:66px;height:21px"><div class="icbg"></div><div class="rico"><svg class="ic" width="16" height="16" viewBox="0 0 16 16" shape-rendering="crispEdges"><rect x="5" y="3" width="11" height="3" fill="#fff"/><rect x="5" y="7" width="5" height="8" fill="#fff"/><rect x="11" y="7" width="5" height="8" fill="#fff"/><rect x="4" y="2" width="1" height="1" fill="#000"/><rect x="5" y="2" width="1" height="1" fill="#000"/><rect x="6" y="2" width="1" height="1" fill="#000"/><rect x="7" y="2" width="1" height="1" fill="#000"/><rect x="8" y="2" width="1" height="1" fill="#000"/><rect x="9" y="2" width="1" height="1" fill="#000"/><rect x="10" y="2" width="1" height="1" fill="#000"/><rect x="11" y="2" width="1" height="1" fill="#000"/><rect x="12" y="2" width="1" height="1" fill="#000"/><rect x="13" y="2" width="1" height="1" fill="#000"/><rect x="14" y="2" width="1" height="1" fill="#000"/><rect x="15" y="2" width="1" height="1" fill="#000"/><rect x="4" y="3" width="1" height="1" fill="#000"/><rect x="4" y="4" width="1" height="1" fill="#000"/><rect x="4" y="5" width="1" height="1" fill="#000"/><rect x="4" y="6" width="1" height="1" fill="#000"/><rect x="4" y="7" width="1" height="1" fill="#000"/><rect x="4" y="8" width="1" height="1" fill="#000"/><rect x="4" y="9" width="1" height="1" fill="#000"/><rect x="4" y="10" width="1" height="1" fill="#000"/><rect x="4" y="11" width="1" height="1" fill="#000"/><rect x="4" y="12" width="1" height="1" fill="#000"/><rect x="4" y="13" width="1" height="1" fill="#000"/><rect x="4" y="14" width="1" height="1" fill="#000"/><rect x="4" y="15" width="1" height="1" fill="#000"/><rect x="4" y="6" width="1" height="1" fill="#000"/><rect x="5" y="6" width="1" height="1" fill="#000"/><rect x="6" y="6" width="1" height="1" fill="#000"/><rect x="7" y="6" width="1" height="1" fill="#000"/><rect x="8" y="6" width="1" height="1" fill="#000"/><rect x="9" y="6" width="1" height="1" fill="#000"/><rect x="10" y="6" width="1" height="1" fill="#000"/><rect x="11" y="6" width="1" height="1" fill="#000"/><rect x="12" y="6" width="1" height="1" fill="#000"/><rect x="13" y="6" width="1" height="1" fill="#000"/><rect x="14" y="6" width="1" height="1" fill="#000"/><rect x="15" y="6" width="1" height="1" fill="#000"/><rect x="10" y="7" width="1" height="1" fill="#000"/><rect x="10" y="8" width="1" height="1" fill="#000"/><rect x="10" y="9" width="1" height="1" fill="#000"/><rect x="10" y="10" width="1" height="1" fill="#000"/><rect x="10" y="11" width="1" height="1" fill="#000"/><rect x="10" y="12" width="1" height="1" fill="#000"/><rect x="10" y="13" width="1" height="1" fill="#000"/><rect x="10" y="14" width="1" height="1" fill="#000"/><rect x="10" y="15" width="1" height="1" fill="#000"/><rect x="9" y="4" width="1" height="1" fill="#000"/><rect x="10" y="4" width="1" height="1" fill="#000"/><rect x="11" y="4" width="1" height="1" fill="#000"/><rect x="8" y="8" width="1" height="1" fill="#000"/><rect x="12" y="8" width="1" height="1" fill="#000"/><rect x="4" y="15" width="1" height="1" fill="#000"/><rect x="5" y="15" width="1" height="1" fill="#000"/><rect x="6" y="15" width="1" height="1" fill="#000"/><rect x="7" y="15" width="1" height="1" fill="#000"/><rect x="8" y="15" width="1" height="1" fill="#000"/><rect x="9" y="15" width="1" height="1" fill="#000"/><rect x="10" y="15" width="1" height="1" fill="#000"/><rect x="11" y="15" width="1" height="1" fill="#000"/><rect x="12" y="15" width="1" height="1" fill="#000"/><rect x="13" y="15" width="1" height="1" fill="#000"/><rect x="14" y="15" width="1" height="1" fill="#000"/><rect x="15" y="15" width="1" height="1" fill="#000"/></svg></div><span class="c g" style="left:19px">1</span><span class="c" style="left:59px">KBD30-3</span><span class="c" style="left:200px">29 3/4</span><span class="c" style="left:278px">34 1/2</span><span class="c" style="left:328px">24</span><span class="c g" style="left:378px">Estimators Toolbox</span><span class="c g" style="left:524px">Shaker</span></div>
<div class="r l" style="top:87px;height:21px"><div class="icbg"></div><div class="rico"><svg class="ic" width="16" height="16" viewBox="0 0 16 16" shape-rendering="crispEdges"><rect x="5" y="3" width="11" height="3" fill="#fff"/><rect x="5" y="7" width="5" height="8" fill="#fff"/><rect x="11" y="7" width="5" height="8" fill="#fff"/><rect x="4" y="2" width="1" height="1" fill="#000"/><rect x="5" y="2" width="1" height="1" fill="#000"/><rect x="6" y="2" width="1" height="1" fill="#000"/><rect x="7" y="2" width="1" height="1" fill="#000"/><rect x="8" y="2" width="1" height="1" fill="#000"/><rect x="9" y="2" width="1" height="1" fill="#000"/><rect x="10" y="2" width="1" height="1" fill="#000"/><rect x="11" y="2" width="1" height="1" fill="#000"/><rect x="12" y="2" width="1" height="1" fill="#000"/><rect x="13" y="2" width="1" height="1" fill="#000"/><rect x="14" y="2" width="1" height="1" fill="#000"/><rect x="15" y="2" width="1" height="1" fill="#000"/><rect x="4" y="3" width="1" height="1" fill="#000"/><rect x="4" y="4" width="1" height="1" fill="#000"/><rect x="4" y="5" width="1" height="1" fill="#000"/><rect x="4" y="6" width="1" height="1" fill="#000"/><rect x="4" y="7" width="1" height="1" fill="#000"/><rect x="4" y="8" width="1" height="1" fill="#000"/><rect x="4" y="9" width="1" height="1" fill="#000"/><rect x="4" y="10" width="1" height="1" fill="#000"/><rect x="4" y="11" width="1" height="1" fill="#000"/><rect x="4" y="12" width="1" height="1" fill="#000"/><rect x="4" y="13" width="1" height="1" fill="#000"/><rect x="4" y="14" width="1" height="1" fill="#000"/><rect x="4" y="15" width="1" height="1" fill="#000"/><rect x="4" y="6" width="1" height="1" fill="#000"/><rect x="5" y="6" width="1" height="1" fill="#000"/><rect x="6" y="6" width="1" height="1" fill="#000"/><rect x="7" y="6" width="1" height="1" fill="#000"/><rect x="8" y="6" width="1" height="1" fill="#000"/><rect x="9" y="6" width="1" height="1" fill="#000"/><rect x="10" y="6" width="1" height="1" fill="#000"/><rect x="11" y="6" width="1" height="1" fill="#000"/><rect x="12" y="6" width="1" height="1" fill="#000"/><rect x="13" y="6" width="1" height="1" fill="#000"/><rect x="14" y="6" width="1" height="1" fill="#000"/><rect x="15" y="6" width="1" height="1" fill="#000"/><rect x="10" y="7" width="1" height="1" fill="#000"/><rect x="10" y="8" width="1" height="1" fill="#000"/><rect x="10" y="9" width="1" height="1" fill="#000"/><rect x="10" y="10" width="1" height="1" fill="#000"/><rect x="10" y="11" width="1" height="1" fill="#000"/><rect x="10" y="12" width="1" height="1" fill="#000"/><rect x="10" y="13" width="1" height="1" fill="#000"/><rect x="10" y="14" width="1" height="1" fill="#000"/><rect x="10" y="15" width="1" height="1" fill="#000"/><rect x="9" y="4" width="1" height="1" fill="#000"/><rect x="10" y="4" width="1" height="1" fill="#000"/><rect x="11" y="4" width="1" height="1" fill="#000"/><rect x="8" y="8" width="1" height="1" fill="#000"/><rect x="12" y="8" width="1" height="1" fill="#000"/><rect x="4" y="15" width="1" height="1" fill="#000"/><rect x="5" y="15" width="1" height="1" fill="#000"/><rect x="6" y="15" width="1" height="1" fill="#000"/><rect x="7" y="15" width="1" height="1" fill="#000"/><rect x="8" y="15" width="1" height="1" fill="#000"/><rect x="9" y="15" width="1" height="1" fill="#000"/><rect x="10" y="15" width="1" height="1" fill="#000"/><rect x="11" y="15" width="1" height="1" fill="#000"/><rect x="12" y="15" width="1" height="1" fill="#000"/><rect x="13" y="15" width="1" height="1" fill="#000"/><rect x="14" y="15" width="1" height="1" fill="#000"/><rect x="15" y="15" width="1" height="1" fill="#000"/></svg></div><span class="c g" style="left:19px">2</span><span class="c" style="left:59px">KBD30-3</span><span class="c" style="left:200px">29 3/4</span><span class="c" style="left:278px">34 1/2</span><span class="c" style="left:328px">24</span><span class="c g" style="left:378px">Estimators Toolbox</span><span class="c g" style="left:524px">Shaker</span></div>
<div class="r d" style="top:108px;height:21px"><div class="icbg"></div><div class="rico"><svg class="ic" width="16" height="16" viewBox="0 0 16 16" shape-rendering="crispEdges"><rect x="5" y="3" width="11" height="3" fill="#fff"/><rect x="5" y="7" width="5" height="8" fill="#fff"/><rect x="11" y="7" width="5" height="8" fill="#fff"/><rect x="4" y="2" width="1" height="1" fill="#000"/><rect x="5" y="2" width="1" height="1" fill="#000"/><rect x="6" y="2" width="1" height="1" fill="#000"/><rect x="7" y="2" width="1" height="1" fill="#000"/><rect x="8" y="2" width="1" height="1" fill="#000"/><rect x="9" y="2" width="1" height="1" fill="#000"/><rect x="10" y="2" width="1" height="1" fill="#000"/><rect x="11" y="2" width="1" height="1" fill="#000"/><rect x="12" y="2" width="1" height="1" fill="#000"/><rect x="13" y="2" width="1" height="1" fill="#000"/><rect x="14" y="2" width="1" height="1" fill="#000"/><rect x="15" y="2" width="1" height="1" fill="#000"/><rect x="4" y="3" width="1" height="1" fill="#000"/><rect x="4" y="4" width="1" height="1" fill="#000"/><rect x="4" y="5" width="1" height="1" fill="#000"/><rect x="4" y="6" width="1" height="1" fill="#000"/><rect x="4" y="7" width="1" height="1" fill="#000"/><rect x="4" y="8" width="1" height="1" fill="#000"/><rect x="4" y="9" width="1" height="1" fill="#000"/><rect x="4" y="10" width="1" height="1" fill="#000"/><rect x="4" y="11" width="1" height="1" fill="#000"/><rect x="4" y="12" width="1" height="1" fill="#000"/><rect x="4" y="13" width="1" height="1" fill="#000"/><rect x="4" y="14" width="1" height="1" fill="#000"/><rect x="4" y="15" width="1" height="1" fill="#000"/><rect x="4" y="6" width="1" height="1" fill="#000"/><rect x="5" y="6" width="1" height="1" fill="#000"/><rect x="6" y="6" width="1" height="1" fill="#000"/><rect x="7" y="6" width="1" height="1" fill="#000"/><rect x="8" y="6" width="1" height="1" fill="#000"/><rect x="9" y="6" width="1" height="1" fill="#000"/><rect x="10" y="6" width="1" height="1" fill="#000"/><rect x="11" y="6" width="1" height="1" fill="#000"/><rect x="12" y="6" width="1" height="1" fill="#000"/><rect x="13" y="6" width="1" height="1" fill="#000"/><rect x="14" y="6" width="1" height="1" fill="#000"/><rect x="15" y="6" width="1" height="1" fill="#000"/><rect x="10" y="7" width="1" height="1" fill="#000"/><rect x="10" y="8" width="1" height="1" fill="#000"/><rect x="10" y="9" width="1" height="1" fill="#000"/><rect x="10" y="10" width="1" height="1" fill="#000"/><rect x="10" y="11" width="1" height="1" fill="#000"/><rect x="10" y="12" width="1" height="1" fill="#000"/><rect x="10" y="13" width="1" height="1" fill="#000"/><rect x="10" y="14" width="1" height="1" fill="#000"/><rect x="10" y="15" width="1" height="1" fill="#000"/><rect x="9" y="4" width="1" height="1" fill="#000"/><rect x="10" y="4" width="1" height="1" fill="#000"/><rect x="11" y="4" width="1" height="1" fill="#000"/><rect x="8" y="8" width="1" height="1" fill="#000"/><rect x="12" y="8" width="1" height="1" fill="#000"/><rect x="4" y="15" width="1" height="1" fill="#000"/><rect x="5" y="15" width="1" height="1" fill="#000"/><rect x="6" y="15" width="1" height="1" fill="#000"/><rect x="7" y="15" width="1" height="1" fill="#000"/><rect x="8" y="15" width="1" height="1" fill="#000"/><rect x="9" y="15" width="1" height="1" fill="#000"/><rect x="10" y="15" width="1" height="1" fill="#000"/><rect x="11" y="15" width="1" height="1" fill="#000"/><rect x="12" y="15" width="1" height="1" fill="#000"/><rect x="13" y="15" width="1" height="1" fill="#000"/><rect x="14" y="15" width="1" height="1" fill="#000"/><rect x="15" y="15" width="1" height="1" fill="#000"/></svg></div><span class="c g" style="left:19px">3</span><span class="c" style="left:59px">BMW30</span><span class="c" style="left:200px">28 5/8</span><span class="c" style="left:278px">34 1/2</span><span class="c" style="left:328px">24</span><span class="c g" style="left:378px">Estimators Toolbox</span><span class="c g" style="left:524px">Shaker</span></div>
<div class="r l" style="top:129px;height:21px"><div class="icbg"></div><div class="rico"><svg class="ic" width="16" height="16" viewBox="0 0 16 16" shape-rendering="crispEdges"><rect x="5" y="3" width="11" height="3" fill="#fff"/><rect x="5" y="7" width="5" height="8" fill="#fff"/><rect x="11" y="7" width="5" height="8" fill="#fff"/><rect x="4" y="2" width="1" height="1" fill="#000"/><rect x="5" y="2" width="1" height="1" fill="#000"/><rect x="6" y="2" width="1" height="1" fill="#000"/><rect x="7" y="2" width="1" height="1" fill="#000"/><rect x="8" y="2" width="1" height="1" fill="#000"/><rect x="9" y="2" width="1" height="1" fill="#000"/><rect x="10" y="2" width="1" height="1" fill="#000"/><rect x="11" y="2" width="1" height="1" fill="#000"/><rect x="12" y="2" width="1" height="1" fill="#000"/><rect x="13" y="2" width="1" height="1" fill="#000"/><rect x="14" y="2" width="1" height="1" fill="#000"/><rect x="15" y="2" width="1" height="1" fill="#000"/><rect x="4" y="3" width="1" height="1" fill="#000"/><rect x="4" y="4" width="1" height="1" fill="#000"/><rect x="4" y="5" width="1" height="1" fill="#000"/><rect x="4" y="6" width="1" height="1" fill="#000"/><rect x="4" y="7" width="1" height="1" fill="#000"/><rect x="4" y="8" width="1" height="1" fill="#000"/><rect x="4" y="9" width="1" height="1" fill="#000"/><rect x="4" y="10" width="1" height="1" fill="#000"/><rect x="4" y="11" width="1" height="1" fill="#000"/><rect x="4" y="12" width="1" height="1" fill="#000"/><rect x="4" y="13" width="1" height="1" fill="#000"/><rect x="4" y="14" width="1" height="1" fill="#000"/><rect x="4" y="15" width="1" height="1" fill="#000"/><rect x="4" y="6" width="1" height="1" fill="#000"/><rect x="5" y="6" width="1" height="1" fill="#000"/><rect x="6" y="6" width="1" height="1" fill="#000"/><rect x="7" y="6" width="1" height="1" fill="#000"/><rect x="8" y="6" width="1" height="1" fill="#000"/><rect x="9" y="6" width="1" height="1" fill="#000"/><rect x="10" y="6" width="1" height="1" fill="#000"/><rect x="11" y="6" width="1" height="1" fill="#000"/><rect x="12" y="6" width="1" height="1" fill="#000"/><rect x="13" y="6" width="1" height="1" fill="#000"/><rect x="14" y="6" width="1" height="1" fill="#000"/><rect x="15" y="6" width="1" height="1" fill="#000"/><rect x="10" y="7" width="1" height="1" fill="#000"/><rect x="10" y="8" width="1" height="1" fill="#000"/><rect x="10" y="9" width="1" height="1" fill="#000"/><rect x="10" y="10" width="1" height="1" fill="#000"/><rect x="10" y="11" width="1" height="1" fill="#000"/><rect x="10" y="12" width="1" height="1" fill="#000"/><rect x="10" y="13" width="1" height="1" fill="#000"/><rect x="10" y="14" width="1" height="1" fill="#000"/><rect x="10" y="15" width="1" height="1" fill="#000"/><rect x="9" y="4" width="1" height="1" fill="#000"/><rect x="10" y="4" width="1" height="1" fill="#000"/><rect x="11" y="4" width="1" height="1" fill="#000"/><rect x="8" y="8" width="1" height="1" fill="#000"/><rect x="12" y="8" width="1" height="1" fill="#000"/><rect x="4" y="15" width="1" height="1" fill="#000"/><rect x="5" y="15" width="1" height="1" fill="#000"/><rect x="6" y="15" width="1" height="1" fill="#000"/><rect x="7" y="15" width="1" height="1" fill="#000"/><rect x="8" y="15" width="1" height="1" fill="#000"/><rect x="9" y="15" width="1" height="1" fill="#000"/><rect x="10" y="15" width="1" height="1" fill="#000"/><rect x="11" y="15" width="1" height="1" fill="#000"/><rect x="12" y="15" width="1" height="1" fill="#000"/><rect x="13" y="15" width="1" height="1" fill="#000"/><rect x="14" y="15" width="1" height="1" fill="#000"/><rect x="15" y="15" width="1" height="1" fill="#000"/></svg></div><span class="c g" style="left:19px">4</span><span class="c" style="left:59px">KBD30-3</span><span class="c" style="left:200px">30</span><span class="c" style="left:278px">34 1/2</span><span class="c" style="left:328px">24</span><span class="c g" style="left:378px">Estimators Toolbox</span><span class="c g" style="left:524px">Shaker</span></div>
<div class="r d" style="top:150px;height:21px"><div class="icbg"></div><div class="rico"><svg class="ic" width="16" height="16" viewBox="0 0 16 16" shape-rendering="crispEdges"><rect x="5" y="3" width="11" height="3" fill="#fff"/><rect x="5" y="7" width="5" height="8" fill="#fff"/><rect x="11" y="7" width="5" height="8" fill="#fff"/><rect x="4" y="2" width="1" height="1" fill="#000"/><rect x="5" y="2" width="1" height="1" fill="#000"/><rect x="6" y="2" width="1" height="1" fill="#000"/><rect x="7" y="2" width="1" height="1" fill="#000"/><rect x="8" y="2" width="1" height="1" fill="#000"/><rect x="9" y="2" width="1" height="1" fill="#000"/><rect x="10" y="2" width="1" height="1" fill="#000"/><rect x="11" y="2" width="1" height="1" fill="#000"/><rect x="12" y="2" width="1" height="1" fill="#000"/><rect x="13" y="2" width="1" height="1" fill="#000"/><rect x="14" y="2" width="1" height="1" fill="#000"/><rect x="15" y="2" width="1" height="1" fill="#000"/><rect x="4" y="3" width="1" height="1" fill="#000"/><rect x="4" y="4" width="1" height="1" fill="#000"/><rect x="4" y="5" width="1" height="1" fill="#000"/><rect x="4" y="6" width="1" height="1" fill="#000"/><rect x="4" y="7" width="1" height="1" fill="#000"/><rect x="4" y="8" width="1" height="1" fill="#000"/><rect x="4" y="9" width="1" height="1" fill="#000"/><rect x="4" y="10" width="1" height="1" fill="#000"/><rect x="4" y="11" width="1" height="1" fill="#000"/><rect x="4" y="12" width="1" height="1" fill="#000"/><rect x="4" y="13" width="1" height="1" fill="#000"/><rect x="4" y="14" width="1" height="1" fill="#000"/><rect x="4" y="15" width="1" height="1" fill="#000"/><rect x="4" y="6" width="1" height="1" fill="#000"/><rect x="5" y="6" width="1" height="1" fill="#000"/><rect x="6" y="6" width="1" height="1" fill="#000"/><rect x="7" y="6" width="1" height="1" fill="#000"/><rect x="8" y="6" width="1" height="1" fill="#000"/><rect x="9" y="6" width="1" height="1" fill="#000"/><rect x="10" y="6" width="1" height="1" fill="#000"/><rect x="11" y="6" width="1" height="1" fill="#000"/><rect x="12" y="6" width="1" height="1" fill="#000"/><rect x="13" y="6" width="1" height="1" fill="#000"/><rect x="14" y="6" width="1" height="1" fill="#000"/><rect x="15" y="6" width="1" height="1" fill="#000"/><rect x="10" y="7" width="1" height="1" fill="#000"/><rect x="10" y="8" width="1" height="1" fill="#000"/><rect x="10" y="9" width="1" height="1" fill="#000"/><rect x="10" y="10" width="1" height="1" fill="#000"/><rect x="10" y="11" width="1" height="1" fill="#000"/><rect x="10" y="12" width="1" height="1" fill="#000"/><rect x="10" y="13" width="1" height="1" fill="#000"/><rect x="10" y="14" width="1" height="1" fill="#000"/><rect x="10" y="15" width="1" height="1" fill="#000"/><rect x="9" y="4" width="1" height="1" fill="#000"/><rect x="10" y="4" width="1" height="1" fill="#000"/><rect x="11" y="4" width="1" height="1" fill="#000"/><rect x="8" y="8" width="1" height="1" fill="#000"/><rect x="12" y="8" width="1" height="1" fill="#000"/><rect x="4" y="15" width="1" height="1" fill="#000"/><rect x="5" y="15" width="1" height="1" fill="#000"/><rect x="6" y="15" width="1" height="1" fill="#000"/><rect x="7" y="15" width="1" height="1" fill="#000"/><rect x="8" y="15" width="1" height="1" fill="#000"/><rect x="9" y="15" width="1" height="1" fill="#000"/><rect x="10" y="15" width="1" height="1" fill="#000"/><rect x="11" y="15" width="1" height="1" fill="#000"/><rect x="12" y="15" width="1" height="1" fill="#000"/><rect x="13" y="15" width="1" height="1" fill="#000"/><rect x="14" y="15" width="1" height="1" fill="#000"/><rect x="15" y="15" width="1" height="1" fill="#000"/></svg></div><span class="c g" style="left:19px">5</span><span class="c" style="left:59px">KBD30-3</span><span class="c" style="left:200px">30</span><span class="c" style="left:278px">34 1/2</span><span class="c" style="left:328px">24</span><span class="c g" style="left:378px">Estimators Toolbox</span><span class="c g" style="left:524px">Shaker</span></div>
<div class="r l" style="top:171px;height:21px"><div class="icbg"></div><div class="rico"><svg class="ic" width="16" height="16" viewBox="0 0 16 16" shape-rendering="crispEdges"><rect x="12" y="3" width="2" height="2" fill="#fff"/><rect x="6" y="8" width="5" height="1" fill="#fff"/><rect x="7" y="9" width="3" height="1" fill="#fff"/><rect x="8" y="10" width="2" height="1" fill="#fff"/><rect x="9" y="11" width="1" height="1" fill="#fff"/><rect x="11" y="6" width="2" height="1" fill="#fff"/><rect x="10" y="7" width="2" height="1" fill="#fff"/><rect x="11" y="5" width="1" height="1" fill="#fff"/><rect x="10" y="6" width="1" height="1" fill="#fff"/><rect x="12" y="2" width="1" height="1" fill="#000"/><rect x="13" y="2" width="1" height="1" fill="#000"/><rect x="11" y="3" width="1" height="1" fill="#000"/><rect x="14" y="3" width="1" height="1" fill="#000"/><rect x="11" y="4" width="1" height="1" fill="#000"/><rect x="14" y="4" width="1" height="1" fill="#000"/><rect x="10" y="5" width="1" height="1" fill="#000"/><rect x="12" y="5" width="1" height="1" fill="#000"/><rect x="13" y="5" width="1" height="1" fill="#000"/><rect x="9" y="6" width="1" height="1" fill="#000"/><rect x="13" y="6" width="1" height="1" fill="#000"/><rect x="14" y="6" width="1" height="1" fill="#000"/><rect x="6" y="7" width="1" height="1" fill="#000"/><rect x="7" y="7" width="1" height="1" fill="#000"/><rect x="8" y="7" width="1" height="1" fill="#000"/><rect x="12" y="7" width="1" height="1" fill="#000"/><rect x="5" y="8" width="1" height="1" fill="#000"/><rect x="11" y="8" width="1" height="1" fill="#000"/><rect x="6" y="9" width="1" height="1" fill="#000"/><rect x="10" y="9" width="1" height="1" fill="#000"/><rect x="7" y="10" width="1" height="1" fill="#000"/><rect x="10" y="10" width="1" height="1" fill="#000"/><rect x="6" y="11" width="1" height="1" fill="#000"/><rect x="8" y="11" width="1" height="1" fill="#000"/><rect x="10" y="11" width="1" height="1" fill="#000"/><rect x="5" y="12" width="1" height="1" fill="#000"/><rect x="9" y="12" width="1" height="1" fill="#000"/><rect x="4" y="13" width="1" height="1" fill="#000"/><rect x="3" y="14" width="1" height="1" fill="#000"/></svg></div><span class="c g" style="left:19px">5.1</span><span class="c" style="left:59px">570815CR</span><span class="c" style="left:200px">0</span><span class="c" style="left:278px">0</span><span class="c" style="left:328px">0</span><span class="c g" style="left:378px">Estimators Toolbox</span><span class="c g" style="left:524px">None</span></div>
<div class="r d" style="top:192px;height:21px"><div class="icbg"></div><div class="rico"><svg class="ic" width="16" height="16" viewBox="0 0 16 16" shape-rendering="crispEdges"><rect x="5" y="3" width="11" height="3" fill="#fff"/><rect x="5" y="7" width="5" height="8" fill="#fff"/><rect x="11" y="7" width="5" height="8" fill="#fff"/><rect x="4" y="2" width="1" height="1" fill="#000"/><rect x="5" y="2" width="1" height="1" fill="#000"/><rect x="6" y="2" width="1" height="1" fill="#000"/><rect x="7" y="2" width="1" height="1" fill="#000"/><rect x="8" y="2" width="1" height="1" fill="#000"/><rect x="9" y="2" width="1" height="1" fill="#000"/><rect x="10" y="2" width="1" height="1" fill="#000"/><rect x="11" y="2" width="1" height="1" fill="#000"/><rect x="12" y="2" width="1" height="1" fill="#000"/><rect x="13" y="2" width="1" height="1" fill="#000"/><rect x="14" y="2" width="1" height="1" fill="#000"/><rect x="15" y="2" width="1" height="1" fill="#000"/><rect x="4" y="3" width="1" height="1" fill="#000"/><rect x="4" y="4" width="1" height="1" fill="#000"/><rect x="4" y="5" width="1" height="1" fill="#000"/><rect x="4" y="6" width="1" height="1" fill="#000"/><rect x="4" y="7" width="1" height="1" fill="#000"/><rect x="4" y="8" width="1" height="1" fill="#000"/><rect x="4" y="9" width="1" height="1" fill="#000"/><rect x="4" y="10" width="1" height="1" fill="#000"/><rect x="4" y="11" width="1" height="1" fill="#000"/><rect x="4" y="12" width="1" height="1" fill="#000"/><rect x="4" y="13" width="1" height="1" fill="#000"/><rect x="4" y="14" width="1" height="1" fill="#000"/><rect x="4" y="15" width="1" height="1" fill="#000"/><rect x="4" y="6" width="1" height="1" fill="#000"/><rect x="5" y="6" width="1" height="1" fill="#000"/><rect x="6" y="6" width="1" height="1" fill="#000"/><rect x="7" y="6" width="1" height="1" fill="#000"/><rect x="8" y="6" width="1" height="1" fill="#000"/><rect x="9" y="6" width="1" height="1" fill="#000"/><rect x="10" y="6" width="1" height="1" fill="#000"/><rect x="11" y="6" width="1" height="1" fill="#000"/><rect x="12" y="6" width="1" height="1" fill="#000"/><rect x="13" y="6" width="1" height="1" fill="#000"/><rect x="14" y="6" width="1" height="1" fill="#000"/><rect x="15" y="6" width="1" height="1" fill="#000"/><rect x="10" y="7" width="1" height="1" fill="#000"/><rect x="10" y="8" width="1" height="1" fill="#000"/><rect x="10" y="9" width="1" height="1" fill="#000"/><rect x="10" y="10" width="1" height="1" fill="#000"/><rect x="10" y="11" width="1" height="1" fill="#000"/><rect x="10" y="12" width="1" height="1" fill="#000"/><rect x="10" y="13" width="1" height="1" fill="#000"/><rect x="10" y="14" width="1" height="1" fill="#000"/><rect x="10" y="15" width="1" height="1" fill="#000"/><rect x="9" y="4" width="1" height="1" fill="#000"/><rect x="10" y="4" width="1" height="1" fill="#000"/><rect x="11" y="4" width="1" height="1" fill="#000"/><rect x="8" y="8" width="1" height="1" fill="#000"/><rect x="12" y="8" width="1" height="1" fill="#000"/><rect x="4" y="15" width="1" height="1" fill="#000"/><rect x="5" y="15" width="1" height="1" fill="#000"/><rect x="6" y="15" width="1" height="1" fill="#000"/><rect x="7" y="15" width="1" height="1" fill="#000"/><rect x="8" y="15" width="1" height="1" fill="#000"/><rect x="9" y="15" width="1" height="1" fill="#000"/><rect x="10" y="15" width="1" height="1" fill="#000"/><rect x="11" y="15" width="1" height="1" fill="#000"/><rect x="12" y="15" width="1" height="1" fill="#000"/><rect x="13" y="15" width="1" height="1" fill="#000"/><rect x="14" y="15" width="1" height="1" fill="#000"/><rect x="15" y="15" width="1" height="1" fill="#000"/></svg></div><span class="c g" style="left:19px">6</span><span class="c" style="left:59px">BBDWR39</span><span class="c" style="left:200px">109 1/2</span><span class="c" style="left:278px">16 1/2</span><span class="c" style="left:328px">18</span><span class="c g" style="left:378px">Estimators Toolbox</span><span class="c g" style="left:524px">Shaker</span></div>
<div class="r l" style="top:213px;height:21px"><div class="icbg"></div><div class="rico"><svg class="ic" width="16" height="16" viewBox="0 0 16 16" shape-rendering="crispEdges"><rect x="5" y="3" width="11" height="3" fill="#fff"/><rect x="5" y="7" width="5" height="8" fill="#fff"/><rect x="11" y="7" width="5" height="8" fill="#fff"/><rect x="4" y="2" width="1" height="1" fill="#000"/><rect x="5" y="2" width="1" height="1" fill="#000"/><rect x="6" y="2" width="1" height="1" fill="#000"/><rect x="7" y="2" width="1" height="1" fill="#000"/><rect x="8" y="2" width="1" height="1" fill="#000"/><rect x="9" y="2" width="1" height="1" fill="#000"/><rect x="10" y="2" width="1" height="1" fill="#000"/><rect x="11" y="2" width="1" height="1" fill="#000"/><rect x="12" y="2" width="1" height="1" fill="#000"/><rect x="13" y="2" width="1" height="1" fill="#000"/><rect x="14" y="2" width="1" height="1" fill="#000"/><rect x="15" y="2" width="1" height="1" fill="#000"/><rect x="4" y="3" width="1" height="1" fill="#000"/><rect x="4" y="4" width="1" height="1" fill="#000"/><rect x="4" y="5" width="1" height="1" fill="#000"/><rect x="4" y="6" width="1" height="1" fill="#000"/><rect x="4" y="7" width="1" height="1" fill="#000"/><rect x="4" y="8" width="1" height="1" fill="#000"/><rect x="4" y="9" width="1" height="1" fill="#000"/><rect x="4" y="10" width="1" height="1" fill="#000"/><rect x="4" y="11" width="1" height="1" fill="#000"/><rect x="4" y="12" width="1" height="1" fill="#000"/><rect x="4" y="13" width="1" height="1" fill="#000"/><rect x="4" y="14" width="1" height="1" fill="#000"/><rect x="4" y="15" width="1" height="1" fill="#000"/><rect x="4" y="6" width="1" height="1" fill="#000"/><rect x="5" y="6" width="1" height="1" fill="#000"/><rect x="6" y="6" width="1" height="1" fill="#000"/><rect x="7" y="6" width="1" height="1" fill="#000"/><rect x="8" y="6" width="1" height="1" fill="#000"/><rect x="9" y="6" width="1" height="1" fill="#000"/><rect x="10" y="6" width="1" height="1" fill="#000"/><rect x="11" y="6" width="1" height="1" fill="#000"/><rect x="12" y="6" width="1" height="1" fill="#000"/><rect x="13" y="6" width="1" height="1" fill="#000"/><rect x="14" y="6" width="1" height="1" fill="#000"/><rect x="15" y="6" width="1" height="1" fill="#000"/><rect x="10" y="7" width="1" height="1" fill="#000"/><rect x="10" y="8" width="1" height="1" fill="#000"/><rect x="10" y="9" width="1" height="1" fill="#000"/><rect x="10" y="10" width="1" height="1" fill="#000"/><rect x="10" y="11" width="1" height="1" fill="#000"/><rect x="10" y="12" width="1" height="1" fill="#000"/><rect x="10" y="13" width="1" height="1" fill="#000"/><rect x="10" y="14" width="1" height="1" fill="#000"/><rect x="10" y="15" width="1" height="1" fill="#000"/><rect x="9" y="4" width="1" height="1" fill="#000"/><rect x="10" y="4" width="1" height="1" fill="#000"/><rect x="11" y="4" width="1" height="1" fill="#000"/><rect x="8" y="8" width="1" height="1" fill="#000"/><rect x="12" y="8" width="1" height="1" fill="#000"/><rect x="4" y="15" width="1" height="1" fill="#000"/><rect x="5" y="15" width="1" height="1" fill="#000"/><rect x="6" y="15" width="1" height="1" fill="#000"/><rect x="7" y="15" width="1" height="1" fill="#000"/><rect x="8" y="15" width="1" height="1" fill="#000"/><rect x="9" y="15" width="1" height="1" fill="#000"/><rect x="10" y="15" width="1" height="1" fill="#000"/><rect x="11" y="15" width="1" height="1" fill="#000"/><rect x="12" y="15" width="1" height="1" fill="#000"/><rect x="13" y="15" width="1" height="1" fill="#000"/><rect x="14" y="15" width="1" height="1" fill="#000"/><rect x="15" y="15" width="1" height="1" fill="#000"/></svg></div><span class="c g" style="left:19px">7</span><span class="c" style="left:59px">W3948</span><span class="c" style="left:200px">50</span><span class="c" style="left:278px">60</span><span class="c" style="left:328px">12</span><span class="c g" style="left:378px">Estimators Toolbox</span><span class="c g" style="left:524px">Shaker</span></div>
<div class="r d" style="top:234px;height:21px"><div class="icbg"></div><div class="rico"><svg class="ic" width="16" height="16" viewBox="0 0 16 16" shape-rendering="crispEdges"><rect x="5" y="3" width="11" height="3" fill="#fff"/><rect x="5" y="7" width="5" height="8" fill="#fff"/><rect x="11" y="7" width="5" height="8" fill="#fff"/><rect x="4" y="2" width="1" height="1" fill="#000"/><rect x="5" y="2" width="1" height="1" fill="#000"/><rect x="6" y="2" width="1" height="1" fill="#000"/><rect x="7" y="2" width="1" height="1" fill="#000"/><rect x="8" y="2" width="1" height="1" fill="#000"/><rect x="9" y="2" width="1" height="1" fill="#000"/><rect x="10" y="2" width="1" height="1" fill="#000"/><rect x="11" y="2" width="1" height="1" fill="#000"/><rect x="12" y="2" width="1" height="1" fill="#000"/><rect x="13" y="2" width="1" height="1" fill="#000"/><rect x="14" y="2" width="1" height="1" fill="#000"/><rect x="15" y="2" width="1" height="1" fill="#000"/><rect x="4" y="3" width="1" height="1" fill="#000"/><rect x="4" y="4" width="1" height="1" fill="#000"/><rect x="4" y="5" width="1" height="1" fill="#000"/><rect x="4" y="6" width="1" height="1" fill="#000"/><rect x="4" y="7" width="1" height="1" fill="#000"/><rect x="4" y="8" width="1" height="1" fill="#000"/><rect x="4" y="9" width="1" height="1" fill="#000"/><rect x="4" y="10" width="1" height="1" fill="#000"/><rect x="4" y="11" width="1" height="1" fill="#000"/><rect x="4" y="12" width="1" height="1" fill="#000"/><rect x="4" y="13" width="1" height="1" fill="#000"/><rect x="4" y="14" width="1" height="1" fill="#000"/><rect x="4" y="15" width="1" height="1" fill="#000"/><rect x="4" y="6" width="1" height="1" fill="#000"/><rect x="5" y="6" width="1" height="1" fill="#000"/><rect x="6" y="6" width="1" height="1" fill="#000"/><rect x="7" y="6" width="1" height="1" fill="#000"/><rect x="8" y="6" width="1" height="1" fill="#000"/><rect x="9" y="6" width="1" height="1" fill="#000"/><rect x="10" y="6" width="1" height="1" fill="#000"/><rect x="11" y="6" width="1" height="1" fill="#000"/><rect x="12" y="6" width="1" height="1" fill="#000"/><rect x="13" y="6" width="1" height="1" fill="#000"/><rect x="14" y="6" width="1" height="1" fill="#000"/><rect x="15" y="6" width="1" height="1" fill="#000"/><rect x="10" y="7" width="1" height="1" fill="#000"/><rect x="10" y="8" width="1" height="1" fill="#000"/><rect x="10" y="9" width="1" height="1" fill="#000"/><rect x="10" y="10" width="1" height="1" fill="#000"/><rect x="10" y="11" width="1" height="1" fill="#000"/><rect x="10" y="12" width="1" height="1" fill="#000"/><rect x="10" y="13" width="1" height="1" fill="#000"/><rect x="10" y="14" width="1" height="1" fill="#000"/><rect x="10" y="15" width="1" height="1" fill="#000"/><rect x="9" y="4" width="1" height="1" fill="#000"/><rect x="10" y="4" width="1" height="1" fill="#000"/><rect x="11" y="4" width="1" height="1" fill="#000"/><rect x="8" y="8" width="1" height="1" fill="#000"/><rect x="12" y="8" width="1" height="1" fill="#000"/><rect x="4" y="15" width="1" height="1" fill="#000"/><rect x="5" y="15" width="1" height="1" fill="#000"/><rect x="6" y="15" width="1" height="1" fill="#000"/><rect x="7" y="15" width="1" height="1" fill="#000"/><rect x="8" y="15" width="1" height="1" fill="#000"/><rect x="9" y="15" width="1" height="1" fill="#000"/><rect x="10" y="15" width="1" height="1" fill="#000"/><rect x="11" y="15" width="1" height="1" fill="#000"/><rect x="12" y="15" width="1" height="1" fill="#000"/><rect x="13" y="15" width="1" height="1" fill="#000"/><rect x="14" y="15" width="1" height="1" fill="#000"/><rect x="15" y="15" width="1" height="1" fill="#000"/></svg></div><span class="c g" style="left:19px">8</span><span class="c" style="left:59px">BFHD24R</span><span class="c" style="left:200px">24</span><span class="c" style="left:278px">34 1/2</span><span class="c" style="left:328px">24</span><span class="c g" style="left:378px">Estimators Toolbox</span><span class="c g" style="left:524px">Shaker</span></div>
<div class="r l" style="top:255px;height:21px"><div class="icbg"></div><div class="rico"><svg class="ic" width="16" height="16" viewBox="0 0 16 16" shape-rendering="crispEdges"><rect x="5" y="3" width="11" height="3" fill="#fff"/><rect x="5" y="7" width="5" height="8" fill="#fff"/><rect x="11" y="7" width="5" height="8" fill="#fff"/><rect x="4" y="2" width="1" height="1" fill="#000"/><rect x="5" y="2" width="1" height="1" fill="#000"/><rect x="6" y="2" width="1" height="1" fill="#000"/><rect x="7" y="2" width="1" height="1" fill="#000"/><rect x="8" y="2" width="1" height="1" fill="#000"/><rect x="9" y="2" width="1" height="1" fill="#000"/><rect x="10" y="2" width="1" height="1" fill="#000"/><rect x="11" y="2" width="1" height="1" fill="#000"/><rect x="12" y="2" width="1" height="1" fill="#000"/><rect x="13" y="2" width="1" height="1" fill="#000"/><rect x="14" y="2" width="1" height="1" fill="#000"/><rect x="15" y="2" width="1" height="1" fill="#000"/><rect x="4" y="3" width="1" height="1" fill="#000"/><rect x="4" y="4" width="1" height="1" fill="#000"/><rect x="4" y="5" width="1" height="1" fill="#000"/><rect x="4" y="6" width="1" height="1" fill="#000"/><rect x="4" y="7" width="1" height="1" fill="#000"/><rect x="4" y="8" width="1" height="1" fill="#000"/><rect x="4" y="9" width="1" height="1" fill="#000"/><rect x="4" y="10" width="1" height="1" fill="#000"/><rect x="4" y="11" width="1" height="1" fill="#000"/><rect x="4" y="12" width="1" height="1" fill="#000"/><rect x="4" y="13" width="1" height="1" fill="#000"/><rect x="4" y="14" width="1" height="1" fill="#000"/><rect x="4" y="15" width="1" height="1" fill="#000"/><rect x="4" y="6" width="1" height="1" fill="#000"/><rect x="5" y="6" width="1" height="1" fill="#000"/><rect x="6" y="6" width="1" height="1" fill="#000"/><rect x="7" y="6" width="1" height="1" fill="#000"/><rect x="8" y="6" width="1" height="1" fill="#000"/><rect x="9" y="6" width="1" height="1" fill="#000"/><rect x="10" y="6" width="1" height="1" fill="#000"/><rect x="11" y="6" width="1" height="1" fill="#000"/><rect x="12" y="6" width="1" height="1" fill="#000"/><rect x="13" y="6" width="1" height="1" fill="#000"/><rect x="14" y="6" width="1" height="1" fill="#000"/><rect x="15" y="6" width="1" height="1" fill="#000"/><rect x="10" y="7" width="1" height="1" fill="#000"/><rect x="10" y="8" width="1" height="1" fill="#000"/><rect x="10" y="9" width="1" height="1" fill="#000"/><rect x="10" y="10" width="1" height="1" fill="#000"/><rect x="10" y="11" width="1" height="1" fill="#000"/><rect x="10" y="12" width="1" height="1" fill="#000"/><rect x="10" y="13" width="1" height="1" fill="#000"/><rect x="10" y="14" width="1" height="1" fill="#000"/><rect x="10" y="15" width="1" height="1" fill="#000"/><rect x="9" y="4" width="1" height="1" fill="#000"/><rect x="10" y="4" width="1" height="1" fill="#000"/><rect x="11" y="4" width="1" height="1" fill="#000"/><rect x="8" y="8" width="1" height="1" fill="#000"/><rect x="12" y="8" width="1" height="1" fill="#000"/><rect x="4" y="15" width="1" height="1" fill="#000"/><rect x="5" y="15" width="1" height="1" fill="#000"/><rect x="6" y="15" width="1" height="1" fill="#000"/><rect x="7" y="15" width="1" height="1" fill="#000"/><rect x="8" y="15" width="1" height="1" fill="#000"/><rect x="9" y="15" width="1" height="1" fill="#000"/><rect x="10" y="15" width="1" height="1" fill="#000"/><rect x="11" y="15" width="1" height="1" fill="#000"/><rect x="12" y="15" width="1" height="1" fill="#000"/><rect x="13" y="15" width="1" height="1" fill="#000"/><rect x="14" y="15" width="1" height="1" fill="#000"/><rect x="15" y="15" width="1" height="1" fill="#000"/></svg></div><span class="c g" style="left:19px">9</span><span class="c" style="left:59px">BFHD24L</span><span class="c" style="left:200px">24</span><span class="c" style="left:278px">34 1/2</span><span class="c" style="left:328px">24</span><span class="c g" style="left:378px">Estimators Toolbox</span><span class="c g" style="left:524px">Shaker</span></div>
<div class="r d" style="top:276px;height:21px"><div class="icbg"></div><div class="rico"><svg class="ic" width="16" height="16" viewBox="0 0 16 16" shape-rendering="crispEdges"><rect x="5" y="3" width="11" height="3" fill="#fff"/><rect x="5" y="7" width="5" height="8" fill="#fff"/><rect x="11" y="7" width="5" height="8" fill="#fff"/><rect x="4" y="2" width="1" height="1" fill="#000"/><rect x="5" y="2" width="1" height="1" fill="#000"/><rect x="6" y="2" width="1" height="1" fill="#000"/><rect x="7" y="2" width="1" height="1" fill="#000"/><rect x="8" y="2" width="1" height="1" fill="#000"/><rect x="9" y="2" width="1" height="1" fill="#000"/><rect x="10" y="2" width="1" height="1" fill="#000"/><rect x="11" y="2" width="1" height="1" fill="#000"/><rect x="12" y="2" width="1" height="1" fill="#000"/><rect x="13" y="2" width="1" height="1" fill="#000"/><rect x="14" y="2" width="1" height="1" fill="#000"/><rect x="15" y="2" width="1" height="1" fill="#000"/><rect x="4" y="3" width="1" height="1" fill="#000"/><rect x="4" y="4" width="1" height="1" fill="#000"/><rect x="4" y="5" width="1" height="1" fill="#000"/><rect x="4" y="6" width="1" height="1" fill="#000"/><rect x="4" y="7" width="1" height="1" fill="#000"/><rect x="4" y="8" width="1" height="1" fill="#000"/><rect x="4" y="9" width="1" height="1" fill="#000"/><rect x="4" y="10" width="1" height="1" fill="#000"/><rect x="4" y="11" width="1" height="1" fill="#000"/><rect x="4" y="12" width="1" height="1" fill="#000"/><rect x="4" y="13" width="1" height="1" fill="#000"/><rect x="4" y="14" width="1" height="1" fill="#000"/><rect x="4" y="15" width="1" height="1" fill="#000"/><rect x="4" y="6" width="1" height="1" fill="#000"/><rect x="5" y="6" width="1" height="1" fill="#000"/><rect x="6" y="6" width="1" height="1" fill="#000"/><rect x="7" y="6" width="1" height="1" fill="#000"/><rect x="8" y="6" width="1" height="1" fill="#000"/><rect x="9" y="6" width="1" height="1" fill="#000"/><rect x="10" y="6" width="1" height="1" fill="#000"/><rect x="11" y="6" width="1" height="1" fill="#000"/><rect x="12" y="6" width="1" height="1" fill="#000"/><rect x="13" y="6" width="1" height="1" fill="#000"/><rect x="14" y="6" width="1" height="1" fill="#000"/><rect x="15" y="6" width="1" height="1" fill="#000"/><rect x="10" y="7" width="1" height="1" fill="#000"/><rect x="10" y="8" width="1" height="1" fill="#000"/><rect x="10" y="9" width="1" height="1" fill="#000"/><rect x="10" y="10" width="1" height="1" fill="#000"/><rect x="10" y="11" width="1" height="1" fill="#000"/><rect x="10" y="12" width="1" height="1" fill="#000"/><rect x="10" y="13" width="1" height="1" fill="#000"/><rect x="10" y="14" width="1" height="1" fill="#000"/><rect x="10" y="15" width="1" height="1" fill="#000"/><rect x="9" y="4" width="1" height="1" fill="#000"/><rect x="10" y="4" width="1" height="1" fill="#000"/><rect x="11" y="4" width="1" height="1" fill="#000"/><rect x="8" y="8" width="1" height="1" fill="#000"/><rect x="12" y="8" width="1" height="1" fill="#000"/><rect x="4" y="15" width="1" height="1" fill="#000"/><rect x="5" y="15" width="1" height="1" fill="#000"/><rect x="6" y="15" width="1" height="1" fill="#000"/><rect x="7" y="15" width="1" height="1" fill="#000"/><rect x="8" y="15" width="1" height="1" fill="#000"/><rect x="9" y="15" width="1" height="1" fill="#000"/><rect x="10" y="15" width="1" height="1" fill="#000"/><rect x="11" y="15" width="1" height="1" fill="#000"/><rect x="12" y="15" width="1" height="1" fill="#000"/><rect x="13" y="15" width="1" height="1" fill="#000"/><rect x="14" y="15" width="1" height="1" fill="#000"/><rect x="15" y="15" width="1" height="1" fill="#000"/></svg></div><span class="c g" style="left:19px">10</span><span class="c" style="left:59px">KBD24-3</span><span class="c" style="left:200px">25</span><span class="c" style="left:278px">34 1/2</span><span class="c" style="left:328px">24</span><span class="c g" style="left:378px">Estimators Toolbox</span><span class="c g" style="left:524px">Shaker</span></div>
<div class="r l" style="top:297px;height:21px"><div class="icbg"></div><div class="rico"><svg class="ic" width="16" height="16" viewBox="0 0 16 16" shape-rendering="crispEdges"><rect x="5" y="3" width="11" height="3" fill="#fff"/><rect x="5" y="7" width="5" height="8" fill="#fff"/><rect x="11" y="7" width="5" height="8" fill="#fff"/><rect x="4" y="2" width="1" height="1" fill="#000"/><rect x="5" y="2" width="1" height="1" fill="#000"/><rect x="6" y="2" width="1" height="1" fill="#000"/><rect x="7" y="2" width="1" height="1" fill="#000"/><rect x="8" y="2" width="1" height="1" fill="#000"/><rect x="9" y="2" width="1" height="1" fill="#000"/><rect x="10" y="2" width="1" height="1" fill="#000"/><rect x="11" y="2" width="1" height="1" fill="#000"/><rect x="12" y="2" width="1" height="1" fill="#000"/><rect x="13" y="2" width="1" height="1" fill="#000"/><rect x="14" y="2" width="1" height="1" fill="#000"/><rect x="15" y="2" width="1" height="1" fill="#000"/><rect x="4" y="3" width="1" height="1" fill="#000"/><rect x="4" y="4" width="1" height="1" fill="#000"/><rect x="4" y="5" width="1" height="1" fill="#000"/><rect x="4" y="6" width="1" height="1" fill="#000"/><rect x="4" y="7" width="1" height="1" fill="#000"/><rect x="4" y="8" width="1" height="1" fill="#000"/><rect x="4" y="9" width="1" height="1" fill="#000"/><rect x="4" y="10" width="1" height="1" fill="#000"/><rect x="4" y="11" width="1" height="1" fill="#000"/><rect x="4" y="12" width="1" height="1" fill="#000"/><rect x="4" y="13" width="1" height="1" fill="#000"/><rect x="4" y="14" width="1" height="1" fill="#000"/><rect x="4" y="15" width="1" height="1" fill="#000"/><rect x="4" y="6" width="1" height="1" fill="#000"/><rect x="5" y="6" width="1" height="1" fill="#000"/><rect x="6" y="6" width="1" height="1" fill="#000"/><rect x="7" y="6" width="1" height="1" fill="#000"/><rect x="8" y="6" width="1" height="1" fill="#000"/><rect x="9" y="6" width="1" height="1" fill="#000"/><rect x="10" y="6" width="1" height="1" fill="#000"/><rect x="11" y="6" width="1" height="1" fill="#000"/><rect x="12" y="6" width="1" height="1" fill="#000"/><rect x="13" y="6" width="1" height="1" fill="#000"/><rect x="14" y="6" width="1" height="1" fill="#000"/><rect x="15" y="6" width="1" height="1" fill="#000"/><rect x="10" y="7" width="1" height="1" fill="#000"/><rect x="10" y="8" width="1" height="1" fill="#000"/><rect x="10" y="9" width="1" height="1" fill="#000"/><rect x="10" y="10" width="1" height="1" fill="#000"/><rect x="10" y="11" width="1" height="1" fill="#000"/><rect x="10" y="12" width="1" height="1" fill="#000"/><rect x="10" y="13" width="1" height="1" fill="#000"/><rect x="10" y="14" width="1" height="1" fill="#000"/><rect x="10" y="15" width="1" height="1" fill="#000"/><rect x="9" y="4" width="1" height="1" fill="#000"/><rect x="10" y="4" width="1" height="1" fill="#000"/><rect x="11" y="4" width="1" height="1" fill="#000"/><rect x="8" y="8" width="1" height="1" fill="#000"/><rect x="12" y="8" width="1" height="1" fill="#000"/><rect x="4" y="15" width="1" height="1" fill="#000"/><rect x="5" y="15" width="1" height="1" fill="#000"/><rect x="6" y="15" width="1" height="1" fill="#000"/><rect x="7" y="15" width="1" height="1" fill="#000"/><rect x="8" y="15" width="1" height="1" fill="#000"/><rect x="9" y="15" width="1" height="1" fill="#000"/><rect x="10" y="15" width="1" height="1" fill="#000"/><rect x="11" y="15" width="1" height="1" fill="#000"/><rect x="12" y="15" width="1" height="1" fill="#000"/><rect x="13" y="15" width="1" height="1" fill="#000"/><rect x="14" y="15" width="1" height="1" fill="#000"/><rect x="15" y="15" width="1" height="1" fill="#000"/></svg></div><span class="c g" style="left:19px">11</span><span class="c" style="left:59px">W3648</span><span class="c" style="left:200px">36 1/2</span><span class="c" style="left:278px">60</span><span class="c" style="left:328px">12</span><span class="c g" style="left:378px">Estimators Toolbox</span><span class="c g" style="left:524px">Shaker</span></div>
<div class="r d" style="top:318px;height:21px"><div class="icbg"></div><div class="rico"><svg class="ic" width="16" height="16" viewBox="0 0 16 16" shape-rendering="crispEdges"><rect x="5" y="3" width="11" height="3" fill="#fff"/><rect x="5" y="7" width="5" height="8" fill="#fff"/><rect x="11" y="7" width="5" height="8" fill="#fff"/><rect x="4" y="2" width="1" height="1" fill="#000"/><rect x="5" y="2" width="1" height="1" fill="#000"/><rect x="6" y="2" width="1" height="1" fill="#000"/><rect x="7" y="2" width="1" height="1" fill="#000"/><rect x="8" y="2" width="1" height="1" fill="#000"/><rect x="9" y="2" width="1" height="1" fill="#000"/><rect x="10" y="2" width="1" height="1" fill="#000"/><rect x="11" y="2" width="1" height="1" fill="#000"/><rect x="12" y="2" width="1" height="1" fill="#000"/><rect x="13" y="2" width="1" height="1" fill="#000"/><rect x="14" y="2" width="1" height="1" fill="#000"/><rect x="15" y="2" width="1" height="1" fill="#000"/><rect x="4" y="3" width="1" height="1" fill="#000"/><rect x="4" y="4" width="1" height="1" fill="#000"/><rect x="4" y="5" width="1" height="1" fill="#000"/><rect x="4" y="6" width="1" height="1" fill="#000"/><rect x="4" y="7" width="1" height="1" fill="#000"/><rect x="4" y="8" width="1" height="1" fill="#000"/><rect x="4" y="9" width="1" height="1" fill="#000"/><rect x="4" y="10" width="1" height="1" fill="#000"/><rect x="4" y="11" width="1" height="1" fill="#000"/><rect x="4" y="12" width="1" height="1" fill="#000"/><rect x="4" y="13" width="1" height="1" fill="#000"/><rect x="4" y="14" width="1" height="1" fill="#000"/><rect x="4" y="15" width="1" height="1" fill="#000"/><rect x="4" y="6" width="1" height="1" fill="#000"/><rect x="5" y="6" width="1" height="1" fill="#000"/><rect x="6" y="6" width="1" height="1" fill="#000"/><rect x="7" y="6" width="1" height="1" fill="#000"/><rect x="8" y="6" width="1" height="1" fill="#000"/><rect x="9" y="6" width="1" height="1" fill="#000"/><rect x="10" y="6" width="1" height="1" fill="#000"/><rect x="11" y="6" width="1" height="1" fill="#000"/><rect x="12" y="6" width="1" height="1" fill="#000"/><rect x="13" y="6" width="1" height="1" fill="#000"/><rect x="14" y="6" width="1" height="1" fill="#000"/><rect x="15" y="6" width="1" height="1" fill="#000"/><rect x="10" y="7" width="1" height="1" fill="#000"/><rect x="10" y="8" width="1" height="1" fill="#000"/><rect x="10" y="9" width="1" height="1" fill="#000"/><rect x="10" y="10" width="1" height="1" fill="#000"/><rect x="10" y="11" width="1" height="1" fill="#000"/><rect x="10" y="12" width="1" height="1" fill="#000"/><rect x="10" y="13" width="1" height="1" fill="#000"/><rect x="10" y="14" width="1" height="1" fill="#000"/><rect x="10" y="15" width="1" height="1" fill="#000"/><rect x="9" y="4" width="1" height="1" fill="#000"/><rect x="10" y="4" width="1" height="1" fill="#000"/><rect x="11" y="4" width="1" height="1" fill="#000"/><rect x="8" y="8" width="1" height="1" fill="#000"/><rect x="12" y="8" width="1" height="1" fill="#000"/><rect x="4" y="15" width="1" height="1" fill="#000"/><rect x="5" y="15" width="1" height="1" fill="#000"/><rect x="6" y="15" width="1" height="1" fill="#000"/><rect x="7" y="15" width="1" height="1" fill="#000"/><rect x="8" y="15" width="1" height="1" fill="#000"/><rect x="9" y="15" width="1" height="1" fill="#000"/><rect x="10" y="15" width="1" height="1" fill="#000"/><rect x="11" y="15" width="1" height="1" fill="#000"/><rect x="12" y="15" width="1" height="1" fill="#000"/><rect x="13" y="15" width="1" height="1" fill="#000"/><rect x="14" y="15" width="1" height="1" fill="#000"/><rect x="15" y="15" width="1" height="1" fill="#000"/></svg></div><span class="c g" style="left:19px">12</span><span class="c" style="left:59px">W3648</span><span class="c" style="left:200px">36 1/2</span><span class="c" style="left:278px">60</span><span class="c" style="left:328px">12</span><span class="c g" style="left:378px">Estimators Toolbox</span><span class="c g" style="left:524px">Shaker</span></div>
<div class="r l" style="top:339px;height:20px"><div class="icbg"></div><div class="rico"><svg class="ic" width="16" height="16" viewBox="0 0 16 16" shape-rendering="crispEdges"><rect x="5" y="3" width="11" height="3" fill="#fff"/><rect x="5" y="7" width="5" height="8" fill="#fff"/><rect x="11" y="7" width="5" height="8" fill="#fff"/><rect x="4" y="2" width="1" height="1" fill="#000"/><rect x="5" y="2" width="1" height="1" fill="#000"/><rect x="6" y="2" width="1" height="1" fill="#000"/><rect x="7" y="2" width="1" height="1" fill="#000"/><rect x="8" y="2" width="1" height="1" fill="#000"/><rect x="9" y="2" width="1" height="1" fill="#000"/><rect x="10" y="2" width="1" height="1" fill="#000"/><rect x="11" y="2" width="1" height="1" fill="#000"/><rect x="12" y="2" width="1" height="1" fill="#000"/><rect x="13" y="2" width="1" height="1" fill="#000"/><rect x="14" y="2" width="1" height="1" fill="#000"/><rect x="15" y="2" width="1" height="1" fill="#000"/><rect x="4" y="3" width="1" height="1" fill="#000"/><rect x="4" y="4" width="1" height="1" fill="#000"/><rect x="4" y="5" width="1" height="1" fill="#000"/><rect x="4" y="6" width="1" height="1" fill="#000"/><rect x="4" y="7" width="1" height="1" fill="#000"/><rect x="4" y="8" width="1" height="1" fill="#000"/><rect x="4" y="9" width="1" height="1" fill="#000"/><rect x="4" y="10" width="1" height="1" fill="#000"/><rect x="4" y="11" width="1" height="1" fill="#000"/><rect x="4" y="12" width="1" height="1" fill="#000"/><rect x="4" y="13" width="1" height="1" fill="#000"/><rect x="4" y="14" width="1" height="1" fill="#000"/><rect x="4" y="15" width="1" height="1" fill="#000"/><rect x="4" y="6" width="1" height="1" fill="#000"/><rect x="5" y="6" width="1" height="1" fill="#000"/><rect x="6" y="6" width="1" height="1" fill="#000"/><rect x="7" y="6" width="1" height="1" fill="#000"/><rect x="8" y="6" width="1" height="1" fill="#000"/><rect x="9" y="6" width="1" height="1" fill="#000"/><rect x="10" y="6" width="1" height="1" fill="#000"/><rect x="11" y="6" width="1" height="1" fill="#000"/><rect x="12" y="6" width="1" height="1" fill="#000"/><rect x="13" y="6" width="1" height="1" fill="#000"/><rect x="14" y="6" width="1" height="1" fill="#000"/><rect x="15" y="6" width="1" height="1" fill="#000"/><rect x="10" y="7" width="1" height="1" fill="#000"/><rect x="10" y="8" width="1" height="1" fill="#000"/><rect x="10" y="9" width="1" height="1" fill="#000"/><rect x="10" y="10" width="1" height="1" fill="#000"/><rect x="10" y="11" width="1" height="1" fill="#000"/><rect x="10" y="12" width="1" height="1" fill="#000"/><rect x="10" y="13" width="1" height="1" fill="#000"/><rect x="10" y="14" width="1" height="1" fill="#000"/><rect x="10" y="15" width="1" height="1" fill="#000"/><rect x="9" y="4" width="1" height="1" fill="#000"/><rect x="10" y="4" width="1" height="1" fill="#000"/><rect x="11" y="4" width="1" height="1" fill="#000"/><rect x="8" y="8" width="1" height="1" fill="#000"/><rect x="12" y="8" width="1" height="1" fill="#000"/><rect x="4" y="15" width="1" height="1" fill="#000"/><rect x="5" y="15" width="1" height="1" fill="#000"/><rect x="6" y="15" width="1" height="1" fill="#000"/><rect x="7" y="15" width="1" height="1" fill="#000"/><rect x="8" y="15" width="1" height="1" fill="#000"/><rect x="9" y="15" width="1" height="1" fill="#000"/><rect x="10" y="15" width="1" height="1" fill="#000"/><rect x="11" y="15" width="1" height="1" fill="#000"/><rect x="12" y="15" width="1" height="1" fill="#000"/><rect x="13" y="15" width="1" height="1" fill="#000"/><rect x="14" y="15" width="1" height="1" fill="#000"/><rect x="15" y="15" width="1" height="1" fill="#000"/></svg></div><span class="c g" style="left:19px">13</span><span class="c" style="left:59px">W243024L</span><span class="c" style="left:200px">36 1/4</span><span class="c" style="left:278px">30</span><span class="c" style="left:328px">24</span><span class="c g" style="left:378px">Estimators Toolbox</span><span class="c g" style="left:524px">Shaker</span></div>
<div class="r d s1" style="top:359px;height:21px"><div class="icbg"></div><div class="rico"><svg class="ic" width="16" height="16" viewBox="0 0 16 16" shape-rendering="crispEdges"><rect x="5" y="3" width="11" height="3" fill="#fff"/><rect x="5" y="7" width="5" height="8" fill="#fff"/><rect x="11" y="7" width="5" height="8" fill="#fff"/><rect x="4" y="2" width="1" height="1" fill="#000"/><rect x="5" y="2" width="1" height="1" fill="#000"/><rect x="6" y="2" width="1" height="1" fill="#000"/><rect x="7" y="2" width="1" height="1" fill="#000"/><rect x="8" y="2" width="1" height="1" fill="#000"/><rect x="9" y="2" width="1" height="1" fill="#000"/><rect x="10" y="2" width="1" height="1" fill="#000"/><rect x="11" y="2" width="1" height="1" fill="#000"/><rect x="12" y="2" width="1" height="1" fill="#000"/><rect x="13" y="2" width="1" height="1" fill="#000"/><rect x="14" y="2" width="1" height="1" fill="#000"/><rect x="15" y="2" width="1" height="1" fill="#000"/><rect x="4" y="3" width="1" height="1" fill="#000"/><rect x="4" y="4" width="1" height="1" fill="#000"/><rect x="4" y="5" width="1" height="1" fill="#000"/><rect x="4" y="6" width="1" height="1" fill="#000"/><rect x="4" y="7" width="1" height="1" fill="#000"/><rect x="4" y="8" width="1" height="1" fill="#000"/><rect x="4" y="9" width="1" height="1" fill="#000"/><rect x="4" y="10" width="1" height="1" fill="#000"/><rect x="4" y="11" width="1" height="1" fill="#000"/><rect x="4" y="12" width="1" height="1" fill="#000"/><rect x="4" y="13" width="1" height="1" fill="#000"/><rect x="4" y="14" width="1" height="1" fill="#000"/><rect x="4" y="15" width="1" height="1" fill="#000"/><rect x="4" y="6" width="1" height="1" fill="#000"/><rect x="5" y="6" width="1" height="1" fill="#000"/><rect x="6" y="6" width="1" height="1" fill="#000"/><rect x="7" y="6" width="1" height="1" fill="#000"/><rect x="8" y="6" width="1" height="1" fill="#000"/><rect x="9" y="6" width="1" height="1" fill="#000"/><rect x="10" y="6" width="1" height="1" fill="#000"/><rect x="11" y="6" width="1" height="1" fill="#000"/><rect x="12" y="6" width="1" height="1" fill="#000"/><rect x="13" y="6" width="1" height="1" fill="#000"/><rect x="14" y="6" width="1" height="1" fill="#000"/><rect x="15" y="6" width="1" height="1" fill="#000"/><rect x="10" y="7" width="1" height="1" fill="#000"/><rect x="10" y="8" width="1" height="1" fill="#000"/><rect x="10" y="9" width="1" height="1" fill="#000"/><rect x="10" y="10" width="1" height="1" fill="#000"/><rect x="10" y="11" width="1" height="1" fill="#000"/><rect x="10" y="12" width="1" height="1" fill="#000"/><rect x="10" y="13" width="1" height="1" fill="#000"/><rect x="10" y="14" width="1" height="1" fill="#000"/><rect x="10" y="15" width="1" height="1" fill="#000"/><rect x="9" y="4" width="1" height="1" fill="#000"/><rect x="10" y="4" width="1" height="1" fill="#000"/><rect x="11" y="4" width="1" height="1" fill="#000"/><rect x="8" y="8" width="1" height="1" fill="#000"/><rect x="12" y="8" width="1" height="1" fill="#000"/><rect x="4" y="15" width="1" height="1" fill="#000"/><rect x="5" y="15" width="1" height="1" fill="#000"/><rect x="6" y="15" width="1" height="1" fill="#000"/><rect x="7" y="15" width="1" height="1" fill="#000"/><rect x="8" y="15" width="1" height="1" fill="#000"/><rect x="9" y="15" width="1" height="1" fill="#000"/><rect x="10" y="15" width="1" height="1" fill="#000"/><rect x="11" y="15" width="1" height="1" fill="#000"/><rect x="12" y="15" width="1" height="1" fill="#000"/><rect x="13" y="15" width="1" height="1" fill="#000"/><rect x="14" y="15" width="1" height="1" fill="#000"/><rect x="15" y="15" width="1" height="1" fill="#000"/></svg></div><span class="c g" style="left:19px">14</span><span class="c" style="left:59px">W243024R</span><span class="c" style="left:200px">36 1/4</span><span class="c" style="left:278px">30</span><span class="c" style="left:328px">24</span><span class="c g" style="left:378px">Estimators Toolbox</span><span class="c g" style="left:524px">Shaker</span></div>
<div class="r l s1" style="top:380px;height:21px"><div class="icbg"></div><div class="rico"><svg class="ic" width="16" height="16" viewBox="0 0 16 16" shape-rendering="crispEdges"><rect x="5" y="3" width="11" height="3" fill="#fff"/><rect x="5" y="7" width="5" height="8" fill="#fff"/><rect x="11" y="7" width="5" height="8" fill="#fff"/><rect x="4" y="2" width="1" height="1" fill="#000"/><rect x="5" y="2" width="1" height="1" fill="#000"/><rect x="6" y="2" width="1" height="1" fill="#000"/><rect x="7" y="2" width="1" height="1" fill="#000"/><rect x="8" y="2" width="1" height="1" fill="#000"/><rect x="9" y="2" width="1" height="1" fill="#000"/><rect x="10" y="2" width="1" height="1" fill="#000"/><rect x="11" y="2" width="1" height="1" fill="#000"/><rect x="12" y="2" width="1" height="1" fill="#000"/><rect x="13" y="2" width="1" height="1" fill="#000"/><rect x="14" y="2" width="1" height="1" fill="#000"/><rect x="15" y="2" width="1" height="1" fill="#000"/><rect x="4" y="3" width="1" height="1" fill="#000"/><rect x="4" y="4" width="1" height="1" fill="#000"/><rect x="4" y="5" width="1" height="1" fill="#000"/><rect x="4" y="6" width="1" height="1" fill="#000"/><rect x="4" y="7" width="1" height="1" fill="#000"/><rect x="4" y="8" width="1" height="1" fill="#000"/><rect x="4" y="9" width="1" height="1" fill="#000"/><rect x="4" y="10" width="1" height="1" fill="#000"/><rect x="4" y="11" width="1" height="1" fill="#000"/><rect x="4" y="12" width="1" height="1" fill="#000"/><rect x="4" y="13" width="1" height="1" fill="#000"/><rect x="4" y="14" width="1" height="1" fill="#000"/><rect x="4" y="15" width="1" height="1" fill="#000"/><rect x="4" y="6" width="1" height="1" fill="#000"/><rect x="5" y="6" width="1" height="1" fill="#000"/><rect x="6" y="6" width="1" height="1" fill="#000"/><rect x="7" y="6" width="1" height="1" fill="#000"/><rect x="8" y="6" width="1" height="1" fill="#000"/><rect x="9" y="6" width="1" height="1" fill="#000"/><rect x="10" y="6" width="1" height="1" fill="#000"/><rect x="11" y="6" width="1" height="1" fill="#000"/><rect x="12" y="6" width="1" height="1" fill="#000"/><rect x="13" y="6" width="1" height="1" fill="#000"/><rect x="14" y="6" width="1" height="1" fill="#000"/><rect x="15" y="6" width="1" height="1" fill="#000"/><rect x="10" y="7" width="1" height="1" fill="#000"/><rect x="10" y="8" width="1" height="1" fill="#000"/><rect x="10" y="9" width="1" height="1" fill="#000"/><rect x="10" y="10" width="1" height="1" fill="#000"/><rect x="10" y="11" width="1" height="1" fill="#000"/><rect x="10" y="12" width="1" height="1" fill="#000"/><rect x="10" y="13" width="1" height="1" fill="#000"/><rect x="10" y="14" width="1" height="1" fill="#000"/><rect x="10" y="15" width="1" height="1" fill="#000"/><rect x="9" y="4" width="1" height="1" fill="#000"/><rect x="10" y="4" width="1" height="1" fill="#000"/><rect x="11" y="4" width="1" height="1" fill="#000"/><rect x="8" y="8" width="1" height="1" fill="#000"/><rect x="12" y="8" width="1" height="1" fill="#000"/><rect x="4" y="15" width="1" height="1" fill="#000"/><rect x="5" y="15" width="1" height="1" fill="#000"/><rect x="6" y="15" width="1" height="1" fill="#000"/><rect x="7" y="15" width="1" height="1" fill="#000"/><rect x="8" y="15" width="1" height="1" fill="#000"/><rect x="9" y="15" width="1" height="1" fill="#000"/><rect x="10" y="15" width="1" height="1" fill="#000"/><rect x="11" y="15" width="1" height="1" fill="#000"/><rect x="12" y="15" width="1" height="1" fill="#000"/><rect x="13" y="15" width="1" height="1" fill="#000"/><rect x="14" y="15" width="1" height="1" fill="#000"/><rect x="15" y="15" width="1" height="1" fill="#000"/></svg></div><span class="c g" style="left:19px">15</span><span class="c" style="left:59px">KBD30-3</span><span class="c" style="left:200px">30</span><span class="c" style="left:278px">34 1/2</span><span class="c" style="left:328px">24</span><span class="c g" style="left:378px">Estimators Toolbox</span><span class="c g" style="left:524px">Shaker</span></div>
<div class="r d s1" style="top:401px;height:21px"><div class="icbg"></div><div class="rico"><svg class="ic" width="16" height="16" viewBox="0 0 16 16" shape-rendering="crispEdges"><rect x="5" y="3" width="11" height="3" fill="#fff"/><rect x="5" y="7" width="5" height="8" fill="#fff"/><rect x="11" y="7" width="5" height="8" fill="#fff"/><rect x="4" y="2" width="1" height="1" fill="#000"/><rect x="5" y="2" width="1" height="1" fill="#000"/><rect x="6" y="2" width="1" height="1" fill="#000"/><rect x="7" y="2" width="1" height="1" fill="#000"/><rect x="8" y="2" width="1" height="1" fill="#000"/><rect x="9" y="2" width="1" height="1" fill="#000"/><rect x="10" y="2" width="1" height="1" fill="#000"/><rect x="11" y="2" width="1" height="1" fill="#000"/><rect x="12" y="2" width="1" height="1" fill="#000"/><rect x="13" y="2" width="1" height="1" fill="#000"/><rect x="14" y="2" width="1" height="1" fill="#000"/><rect x="15" y="2" width="1" height="1" fill="#000"/><rect x="4" y="3" width="1" height="1" fill="#000"/><rect x="4" y="4" width="1" height="1" fill="#000"/><rect x="4" y="5" width="1" height="1" fill="#000"/><rect x="4" y="6" width="1" height="1" fill="#000"/><rect x="4" y="7" width="1" height="1" fill="#000"/><rect x="4" y="8" width="1" height="1" fill="#000"/><rect x="4" y="9" width="1" height="1" fill="#000"/><rect x="4" y="10" width="1" height="1" fill="#000"/><rect x="4" y="11" width="1" height="1" fill="#000"/><rect x="4" y="12" width="1" height="1" fill="#000"/><rect x="4" y="13" width="1" height="1" fill="#000"/><rect x="4" y="14" width="1" height="1" fill="#000"/><rect x="4" y="15" width="1" height="1" fill="#000"/><rect x="4" y="6" width="1" height="1" fill="#000"/><rect x="5" y="6" width="1" height="1" fill="#000"/><rect x="6" y="6" width="1" height="1" fill="#000"/><rect x="7" y="6" width="1" height="1" fill="#000"/><rect x="8" y="6" width="1" height="1" fill="#000"/><rect x="9" y="6" width="1" height="1" fill="#000"/><rect x="10" y="6" width="1" height="1" fill="#000"/><rect x="11" y="6" width="1" height="1" fill="#000"/><rect x="12" y="6" width="1" height="1" fill="#000"/><rect x="13" y="6" width="1" height="1" fill="#000"/><rect x="14" y="6" width="1" height="1" fill="#000"/><rect x="15" y="6" width="1" height="1" fill="#000"/><rect x="10" y="7" width="1" height="1" fill="#000"/><rect x="10" y="8" width="1" height="1" fill="#000"/><rect x="10" y="9" width="1" height="1" fill="#000"/><rect x="10" y="10" width="1" height="1" fill="#000"/><rect x="10" y="11" width="1" height="1" fill="#000"/><rect x="10" y="12" width="1" height="1" fill="#000"/><rect x="10" y="13" width="1" height="1" fill="#000"/><rect x="10" y="14" width="1" height="1" fill="#000"/><rect x="10" y="15" width="1" height="1" fill="#000"/><rect x="9" y="4" width="1" height="1" fill="#000"/><rect x="10" y="4" width="1" height="1" fill="#000"/><rect x="11" y="4" width="1" height="1" fill="#000"/><rect x="8" y="8" width="1" height="1" fill="#000"/><rect x="12" y="8" width="1" height="1" fill="#000"/><rect x="4" y="15" width="1" height="1" fill="#000"/><rect x="5" y="15" width="1" height="1" fill="#000"/><rect x="6" y="15" width="1" height="1" fill="#000"/><rect x="7" y="15" width="1" height="1" fill="#000"/><rect x="8" y="15" width="1" height="1" fill="#000"/><rect x="9" y="15" width="1" height="1" fill="#000"/><rect x="10" y="15" width="1" height="1" fill="#000"/><rect x="11" y="15" width="1" height="1" fill="#000"/><rect x="12" y="15" width="1" height="1" fill="#000"/><rect x="13" y="15" width="1" height="1" fill="#000"/><rect x="14" y="15" width="1" height="1" fill="#000"/><rect x="15" y="15" width="1" height="1" fill="#000"/></svg></div><span class="c g" style="left:19px">16</span><span class="c" style="left:59px">BFHD24R</span><span class="c" style="left:200px">24</span><span class="c" style="left:278px">34 1/2</span><span class="c" style="left:328px">24</span><span class="c g" style="left:378px">Estimators Toolbox</span><span class="c g" style="left:524px">Shaker</span></div>
<div class="r l s1" style="top:422px;height:21px"><div class="icbg"></div><div class="rico"><svg class="ic" width="16" height="16" viewBox="0 0 16 16" shape-rendering="crispEdges"><rect x="5" y="3" width="11" height="3" fill="#fff"/><rect x="5" y="7" width="5" height="8" fill="#fff"/><rect x="11" y="7" width="5" height="8" fill="#fff"/><rect x="4" y="2" width="1" height="1" fill="#000"/><rect x="5" y="2" width="1" height="1" fill="#000"/><rect x="6" y="2" width="1" height="1" fill="#000"/><rect x="7" y="2" width="1" height="1" fill="#000"/><rect x="8" y="2" width="1" height="1" fill="#000"/><rect x="9" y="2" width="1" height="1" fill="#000"/><rect x="10" y="2" width="1" height="1" fill="#000"/><rect x="11" y="2" width="1" height="1" fill="#000"/><rect x="12" y="2" width="1" height="1" fill="#000"/><rect x="13" y="2" width="1" height="1" fill="#000"/><rect x="14" y="2" width="1" height="1" fill="#000"/><rect x="15" y="2" width="1" height="1" fill="#000"/><rect x="4" y="3" width="1" height="1" fill="#000"/><rect x="4" y="4" width="1" height="1" fill="#000"/><rect x="4" y="5" width="1" height="1" fill="#000"/><rect x="4" y="6" width="1" height="1" fill="#000"/><rect x="4" y="7" width="1" height="1" fill="#000"/><rect x="4" y="8" width="1" height="1" fill="#000"/><rect x="4" y="9" width="1" height="1" fill="#000"/><rect x="4" y="10" width="1" height="1" fill="#000"/><rect x="4" y="11" width="1" height="1" fill="#000"/><rect x="4" y="12" width="1" height="1" fill="#000"/><rect x="4" y="13" width="1" height="1" fill="#000"/><rect x="4" y="14" width="1" height="1" fill="#000"/><rect x="4" y="15" width="1" height="1" fill="#000"/><rect x="4" y="6" width="1" height="1" fill="#000"/><rect x="5" y="6" width="1" height="1" fill="#000"/><rect x="6" y="6" width="1" height="1" fill="#000"/><rect x="7" y="6" width="1" height="1" fill="#000"/><rect x="8" y="6" width="1" height="1" fill="#000"/><rect x="9" y="6" width="1" height="1" fill="#000"/><rect x="10" y="6" width="1" height="1" fill="#000"/><rect x="11" y="6" width="1" height="1" fill="#000"/><rect x="12" y="6" width="1" height="1" fill="#000"/><rect x="13" y="6" width="1" height="1" fill="#000"/><rect x="14" y="6" width="1" height="1" fill="#000"/><rect x="15" y="6" width="1" height="1" fill="#000"/><rect x="10" y="7" width="1" height="1" fill="#000"/><rect x="10" y="8" width="1" height="1" fill="#000"/><rect x="10" y="9" width="1" height="1" fill="#000"/><rect x="10" y="10" width="1" height="1" fill="#000"/><rect x="10" y="11" width="1" height="1" fill="#000"/><rect x="10" y="12" width="1" height="1" fill="#000"/><rect x="10" y="13" width="1" height="1" fill="#000"/><rect x="10" y="14" width="1" height="1" fill="#000"/><rect x="10" y="15" width="1" height="1" fill="#000"/><rect x="9" y="4" width="1" height="1" fill="#000"/><rect x="10" y="4" width="1" height="1" fill="#000"/><rect x="11" y="4" width="1" height="1" fill="#000"/><rect x="8" y="8" width="1" height="1" fill="#000"/><rect x="12" y="8" width="1" height="1" fill="#000"/><rect x="4" y="15" width="1" height="1" fill="#000"/><rect x="5" y="15" width="1" height="1" fill="#000"/><rect x="6" y="15" width="1" height="1" fill="#000"/><rect x="7" y="15" width="1" height="1" fill="#000"/><rect x="8" y="15" width="1" height="1" fill="#000"/><rect x="9" y="15" width="1" height="1" fill="#000"/><rect x="10" y="15" width="1" height="1" fill="#000"/><rect x="11" y="15" width="1" height="1" fill="#000"/><rect x="12" y="15" width="1" height="1" fill="#000"/><rect x="13" y="15" width="1" height="1" fill="#000"/><rect x="14" y="15" width="1" height="1" fill="#000"/><rect x="15" y="15" width="1" height="1" fill="#000"/></svg></div><span class="c g" style="left:19px">17</span><span class="c" style="left:59px">BS30</span><span class="c" style="left:200px">30</span><span class="c" style="left:278px">34 1/2</span><span class="c" style="left:328px">24</span><span class="c g" style="left:378px">Estimators Toolbox</span><span class="c g" style="left:524px">Shaker</span></div>
<div class="r d s1" style="top:443px;height:21px"><div class="icbg"></div><div class="rico"><svg class="ic" width="16" height="16" viewBox="0 0 16 16" shape-rendering="crispEdges"><rect x="5" y="3" width="11" height="3" fill="#fff"/><rect x="5" y="7" width="5" height="8" fill="#fff"/><rect x="11" y="7" width="5" height="8" fill="#fff"/><rect x="4" y="2" width="1" height="1" fill="#000"/><rect x="5" y="2" width="1" height="1" fill="#000"/><rect x="6" y="2" width="1" height="1" fill="#000"/><rect x="7" y="2" width="1" height="1" fill="#000"/><rect x="8" y="2" width="1" height="1" fill="#000"/><rect x="9" y="2" width="1" height="1" fill="#000"/><rect x="10" y="2" width="1" height="1" fill="#000"/><rect x="11" y="2" width="1" height="1" fill="#000"/><rect x="12" y="2" width="1" height="1" fill="#000"/><rect x="13" y="2" width="1" height="1" fill="#000"/><rect x="14" y="2" width="1" height="1" fill="#000"/><rect x="15" y="2" width="1" height="1" fill="#000"/><rect x="4" y="3" width="1" height="1" fill="#000"/><rect x="4" y="4" width="1" height="1" fill="#000"/><rect x="4" y="5" width="1" height="1" fill="#000"/><rect x="4" y="6" width="1" height="1" fill="#000"/><rect x="4" y="7" width="1" height="1" fill="#000"/><rect x="4" y="8" width="1" height="1" fill="#000"/><rect x="4" y="9" width="1" height="1" fill="#000"/><rect x="4" y="10" width="1" height="1" fill="#000"/><rect x="4" y="11" width="1" height="1" fill="#000"/><rect x="4" y="12" width="1" height="1" fill="#000"/><rect x="4" y="13" width="1" height="1" fill="#000"/><rect x="4" y="14" width="1" height="1" fill="#000"/><rect x="4" y="15" width="1" height="1" fill="#000"/><rect x="4" y="6" width="1" height="1" fill="#000"/><rect x="5" y="6" width="1" height="1" fill="#000"/><rect x="6" y="6" width="1" height="1" fill="#000"/><rect x="7" y="6" width="1" height="1" fill="#000"/><rect x="8" y="6" width="1" height="1" fill="#000"/><rect x="9" y="6" width="1" height="1" fill="#000"/><rect x="10" y="6" width="1" height="1" fill="#000"/><rect x="11" y="6" width="1" height="1" fill="#000"/><rect x="12" y="6" width="1" height="1" fill="#000"/><rect x="13" y="6" width="1" height="1" fill="#000"/><rect x="14" y="6" width="1" height="1" fill="#000"/><rect x="15" y="6" width="1" height="1" fill="#000"/><rect x="10" y="7" width="1" height="1" fill="#000"/><rect x="10" y="8" width="1" height="1" fill="#000"/><rect x="10" y="9" width="1" height="1" fill="#000"/><rect x="10" y="10" width="1" height="1" fill="#000"/><rect x="10" y="11" width="1" height="1" fill="#000"/><rect x="10" y="12" width="1" height="1" fill="#000"/><rect x="10" y="13" width="1" height="1" fill="#000"/><rect x="10" y="14" width="1" height="1" fill="#000"/><rect x="10" y="15" width="1" height="1" fill="#000"/><rect x="9" y="4" width="1" height="1" fill="#000"/><rect x="10" y="4" width="1" height="1" fill="#000"/><rect x="11" y="4" width="1" height="1" fill="#000"/><rect x="8" y="8" width="1" height="1" fill="#000"/><rect x="12" y="8" width="1" height="1" fill="#000"/><rect x="4" y="15" width="1" height="1" fill="#000"/><rect x="5" y="15" width="1" height="1" fill="#000"/><rect x="6" y="15" width="1" height="1" fill="#000"/><rect x="7" y="15" width="1" height="1" fill="#000"/><rect x="8" y="15" width="1" height="1" fill="#000"/><rect x="9" y="15" width="1" height="1" fill="#000"/><rect x="10" y="15" width="1" height="1" fill="#000"/><rect x="11" y="15" width="1" height="1" fill="#000"/><rect x="12" y="15" width="1" height="1" fill="#000"/><rect x="13" y="15" width="1" height="1" fill="#000"/><rect x="14" y="15" width="1" height="1" fill="#000"/><rect x="15" y="15" width="1" height="1" fill="#000"/></svg></div><span class="c g" style="left:19px">18</span><span class="c" style="left:59px">B24R</span><span class="c" style="left:200px">24</span><span class="c" style="left:278px">34 1/2</span><span class="c" style="left:328px">24</span><span class="c g" style="left:378px">Estimators Toolbox</span><span class="c g" style="left:524px">Shaker</span></div>
<div class="r l s1" style="top:464px;height:21px"><div class="icbg"></div><div class="rico"><svg class="ic" width="16" height="16" viewBox="0 0 16 16" shape-rendering="crispEdges"><rect x="12" y="3" width="2" height="2" fill="#fff"/><rect x="6" y="8" width="5" height="1" fill="#fff"/><rect x="7" y="9" width="3" height="1" fill="#fff"/><rect x="8" y="10" width="2" height="1" fill="#fff"/><rect x="9" y="11" width="1" height="1" fill="#fff"/><rect x="11" y="6" width="2" height="1" fill="#fff"/><rect x="10" y="7" width="2" height="1" fill="#fff"/><rect x="11" y="5" width="1" height="1" fill="#fff"/><rect x="10" y="6" width="1" height="1" fill="#fff"/><rect x="12" y="2" width="1" height="1" fill="#000"/><rect x="13" y="2" width="1" height="1" fill="#000"/><rect x="11" y="3" width="1" height="1" fill="#000"/><rect x="14" y="3" width="1" height="1" fill="#000"/><rect x="11" y="4" width="1" height="1" fill="#000"/><rect x="14" y="4" width="1" height="1" fill="#000"/><rect x="10" y="5" width="1" height="1" fill="#000"/><rect x="12" y="5" width="1" height="1" fill="#000"/><rect x="13" y="5" width="1" height="1" fill="#000"/><rect x="9" y="6" width="1" height="1" fill="#000"/><rect x="13" y="6" width="1" height="1" fill="#000"/><rect x="14" y="6" width="1" height="1" fill="#000"/><rect x="6" y="7" width="1" height="1" fill="#000"/><rect x="7" y="7" width="1" height="1" fill="#000"/><rect x="8" y="7" width="1" height="1" fill="#000"/><rect x="12" y="7" width="1" height="1" fill="#000"/><rect x="5" y="8" width="1" height="1" fill="#000"/><rect x="11" y="8" width="1" height="1" fill="#000"/><rect x="6" y="9" width="1" height="1" fill="#000"/><rect x="10" y="9" width="1" height="1" fill="#000"/><rect x="7" y="10" width="1" height="1" fill="#000"/><rect x="10" y="10" width="1" height="1" fill="#000"/><rect x="6" y="11" width="1" height="1" fill="#000"/><rect x="8" y="11" width="1" height="1" fill="#000"/><rect x="10" y="11" width="1" height="1" fill="#000"/><rect x="5" y="12" width="1" height="1" fill="#000"/><rect x="9" y="12" width="1" height="1" fill="#000"/><rect x="4" y="13" width="1" height="1" fill="#000"/><rect x="3" y="14" width="1" height="1" fill="#000"/></svg></div><span class="c g" style="left:19px">18.1</span><span class="c" style="left:59px">RAS 4WCSC-1527DM-2</span><span class="c" style="left:200px">0</span><span class="c" style="left:278px">0</span><span class="c" style="left:328px">0</span><span class="c g" style="left:378px">Estimators Toolbox</span><span class="c g" style="left:524px">None</span></div>
<div class="r d s1" style="top:485px;height:22px"><div class="icbg"></div><div class="rico"><svg class="ic" width="16" height="16" viewBox="0 0 16 16" shape-rendering="crispEdges"><rect x="5" y="3" width="11" height="3" fill="#fff"/><rect x="5" y="7" width="5" height="8" fill="#fff"/><rect x="11" y="7" width="5" height="8" fill="#fff"/><rect x="4" y="2" width="1" height="1" fill="#000"/><rect x="5" y="2" width="1" height="1" fill="#000"/><rect x="6" y="2" width="1" height="1" fill="#000"/><rect x="7" y="2" width="1" height="1" fill="#000"/><rect x="8" y="2" width="1" height="1" fill="#000"/><rect x="9" y="2" width="1" height="1" fill="#000"/><rect x="10" y="2" width="1" height="1" fill="#000"/><rect x="11" y="2" width="1" height="1" fill="#000"/><rect x="12" y="2" width="1" height="1" fill="#000"/><rect x="13" y="2" width="1" height="1" fill="#000"/><rect x="14" y="2" width="1" height="1" fill="#000"/><rect x="15" y="2" width="1" height="1" fill="#000"/><rect x="4" y="3" width="1" height="1" fill="#000"/><rect x="4" y="4" width="1" height="1" fill="#000"/><rect x="4" y="5" width="1" height="1" fill="#000"/><rect x="4" y="6" width="1" height="1" fill="#000"/><rect x="4" y="7" width="1" height="1" fill="#000"/><rect x="4" y="8" width="1" height="1" fill="#000"/><rect x="4" y="9" width="1" height="1" fill="#000"/><rect x="4" y="10" width="1" height="1" fill="#000"/><rect x="4" y="11" width="1" height="1" fill="#000"/><rect x="4" y="12" width="1" height="1" fill="#000"/><rect x="4" y="13" width="1" height="1" fill="#000"/><rect x="4" y="14" width="1" height="1" fill="#000"/><rect x="4" y="15" width="1" height="1" fill="#000"/><rect x="4" y="6" width="1" height="1" fill="#000"/><rect x="5" y="6" width="1" height="1" fill="#000"/><rect x="6" y="6" width="1" height="1" fill="#000"/><rect x="7" y="6" width="1" height="1" fill="#000"/><rect x="8" y="6" width="1" height="1" fill="#000"/><rect x="9" y="6" width="1" height="1" fill="#000"/><rect x="10" y="6" width="1" height="1" fill="#000"/><rect x="11" y="6" width="1" height="1" fill="#000"/><rect x="12" y="6" width="1" height="1" fill="#000"/><rect x="13" y="6" width="1" height="1" fill="#000"/><rect x="14" y="6" width="1" height="1" fill="#000"/><rect x="15" y="6" width="1" height="1" fill="#000"/><rect x="10" y="7" width="1" height="1" fill="#000"/><rect x="10" y="8" width="1" height="1" fill="#000"/><rect x="10" y="9" width="1" height="1" fill="#000"/><rect x="10" y="10" width="1" height="1" fill="#000"/><rect x="10" y="11" width="1" height="1" fill="#000"/><rect x="10" y="12" width="1" height="1" fill="#000"/><rect x="10" y="13" width="1" height="1" fill="#000"/><rect x="10" y="14" width="1" height="1" fill="#000"/><rect x="10" y="15" width="1" height="1" fill="#000"/><rect x="9" y="4" width="1" height="1" fill="#000"/><rect x="10" y="4" width="1" height="1" fill="#000"/><rect x="11" y="4" width="1" height="1" fill="#000"/><rect x="8" y="8" width="1" height="1" fill="#000"/><rect x="12" y="8" width="1" height="1" fill="#000"/><rect x="4" y="15" width="1" height="1" fill="#000"/><rect x="5" y="15" width="1" height="1" fill="#000"/><rect x="6" y="15" width="1" height="1" fill="#000"/><rect x="7" y="15" width="1" height="1" fill="#000"/><rect x="8" y="15" width="1" height="1" fill="#000"/><rect x="9" y="15" width="1" height="1" fill="#000"/><rect x="10" y="15" width="1" height="1" fill="#000"/><rect x="11" y="15" width="1" height="1" fill="#000"/><rect x="12" y="15" width="1" height="1" fill="#000"/><rect x="13" y="15" width="1" height="1" fill="#000"/><rect x="14" y="15" width="1" height="1" fill="#000"/><rect x="15" y="15" width="1" height="1" fill="#000"/></svg></div><span class="c g" style="left:19px">19</span><span class="c" style="left:59px">BS36</span><span class="c" style="left:200px">38</span><span class="c" style="left:278px">34 1/2</span><span class="c" style="left:328px">24</span><span class="c g" style="left:378px">Estimators Toolbox</span><span class="c g" style="left:524px">Shaker</span></div>
<div class="r l" style="top:507px;height:21px"><div class="icbg"></div><div class="rico"><svg class="ic" width="16" height="16" viewBox="0 0 16 16" shape-rendering="crispEdges"><rect x="12" y="3" width="2" height="2" fill="#fff"/><rect x="6" y="8" width="5" height="1" fill="#fff"/><rect x="7" y="9" width="3" height="1" fill="#fff"/><rect x="8" y="10" width="2" height="1" fill="#fff"/><rect x="9" y="11" width="1" height="1" fill="#fff"/><rect x="11" y="6" width="2" height="1" fill="#fff"/><rect x="10" y="7" width="2" height="1" fill="#fff"/><rect x="11" y="5" width="1" height="1" fill="#fff"/><rect x="10" y="6" width="1" height="1" fill="#fff"/><rect x="12" y="2" width="1" height="1" fill="#000"/><rect x="13" y="2" width="1" height="1" fill="#000"/><rect x="11" y="3" width="1" height="1" fill="#000"/><rect x="14" y="3" width="1" height="1" fill="#000"/><rect x="11" y="4" width="1" height="1" fill="#000"/><rect x="14" y="4" width="1" height="1" fill="#000"/><rect x="10" y="5" width="1" height="1" fill="#000"/><rect x="12" y="5" width="1" height="1" fill="#000"/><rect x="13" y="5" width="1" height="1" fill="#000"/><rect x="9" y="6" width="1" height="1" fill="#000"/><rect x="13" y="6" width="1" height="1" fill="#000"/><rect x="14" y="6" width="1" height="1" fill="#000"/><rect x="6" y="7" width="1" height="1" fill="#000"/><rect x="7" y="7" width="1" height="1" fill="#000"/><rect x="8" y="7" width="1" height="1" fill="#000"/><rect x="12" y="7" width="1" height="1" fill="#000"/><rect x="5" y="8" width="1" height="1" fill="#000"/><rect x="11" y="8" width="1" height="1" fill="#000"/><rect x="6" y="9" width="1" height="1" fill="#000"/><rect x="10" y="9" width="1" height="1" fill="#000"/><rect x="7" y="10" width="1" height="1" fill="#000"/><rect x="10" y="10" width="1" height="1" fill="#000"/><rect x="6" y="11" width="1" height="1" fill="#000"/><rect x="8" y="11" width="1" height="1" fill="#000"/><rect x="10" y="11" width="1" height="1" fill="#000"/><rect x="5" y="12" width="1" height="1" fill="#000"/><rect x="9" y="12" width="1" height="1" fill="#000"/><rect x="4" y="13" width="1" height="1" fill="#000"/><rect x="3" y="14" width="1" height="1" fill="#000"/></svg></div><span class="c g" style="left:19px">19.1</span><span class="c" style="left:59px">448UTBCSC5C</span><span class="c" style="left:200px">0</span><span class="c" style="left:278px">0</span><span class="c" style="left:328px">0</span><span class="c g" style="left:378px">Estimators Toolbox</span><span class="c g" style="left:524px">None</span></div>
    <div class="vl" style="left:16px"></div><div class="vl" style="left:56px"></div><div class="vl" style="left:197px"></div><div class="vl" style="left:275px"></div><div class="vl" style="left:325px"></div><div class="vl" style="left:375px"></div><div class="vl" style="left:521px"></div>
    <div id="gh"><div class="hl" style="left:15px"></div><div class="hl" style="left:55px"></div><div class="hl" style="left:196px"></div><div class="hl" style="left:274px"></div><div class="hl" style="left:324px"></div><div class="hl" style="left:374px"></div><div class="hl" style="left:520px"></div><span class="hc" style="left:20px">Item</span><span class="hc" style="left:60px">Part No.</span><span class="hc" style="left:201px">Width</span><span class="hc" style="left:279px">Height</span><span class="hc" style="left:329px">Depth</span><span class="hc" style="left:379px">Catalog</span><span class="hc" style="left:525px">Door Style</span></div>
  </div>
</div>
</body></html>
